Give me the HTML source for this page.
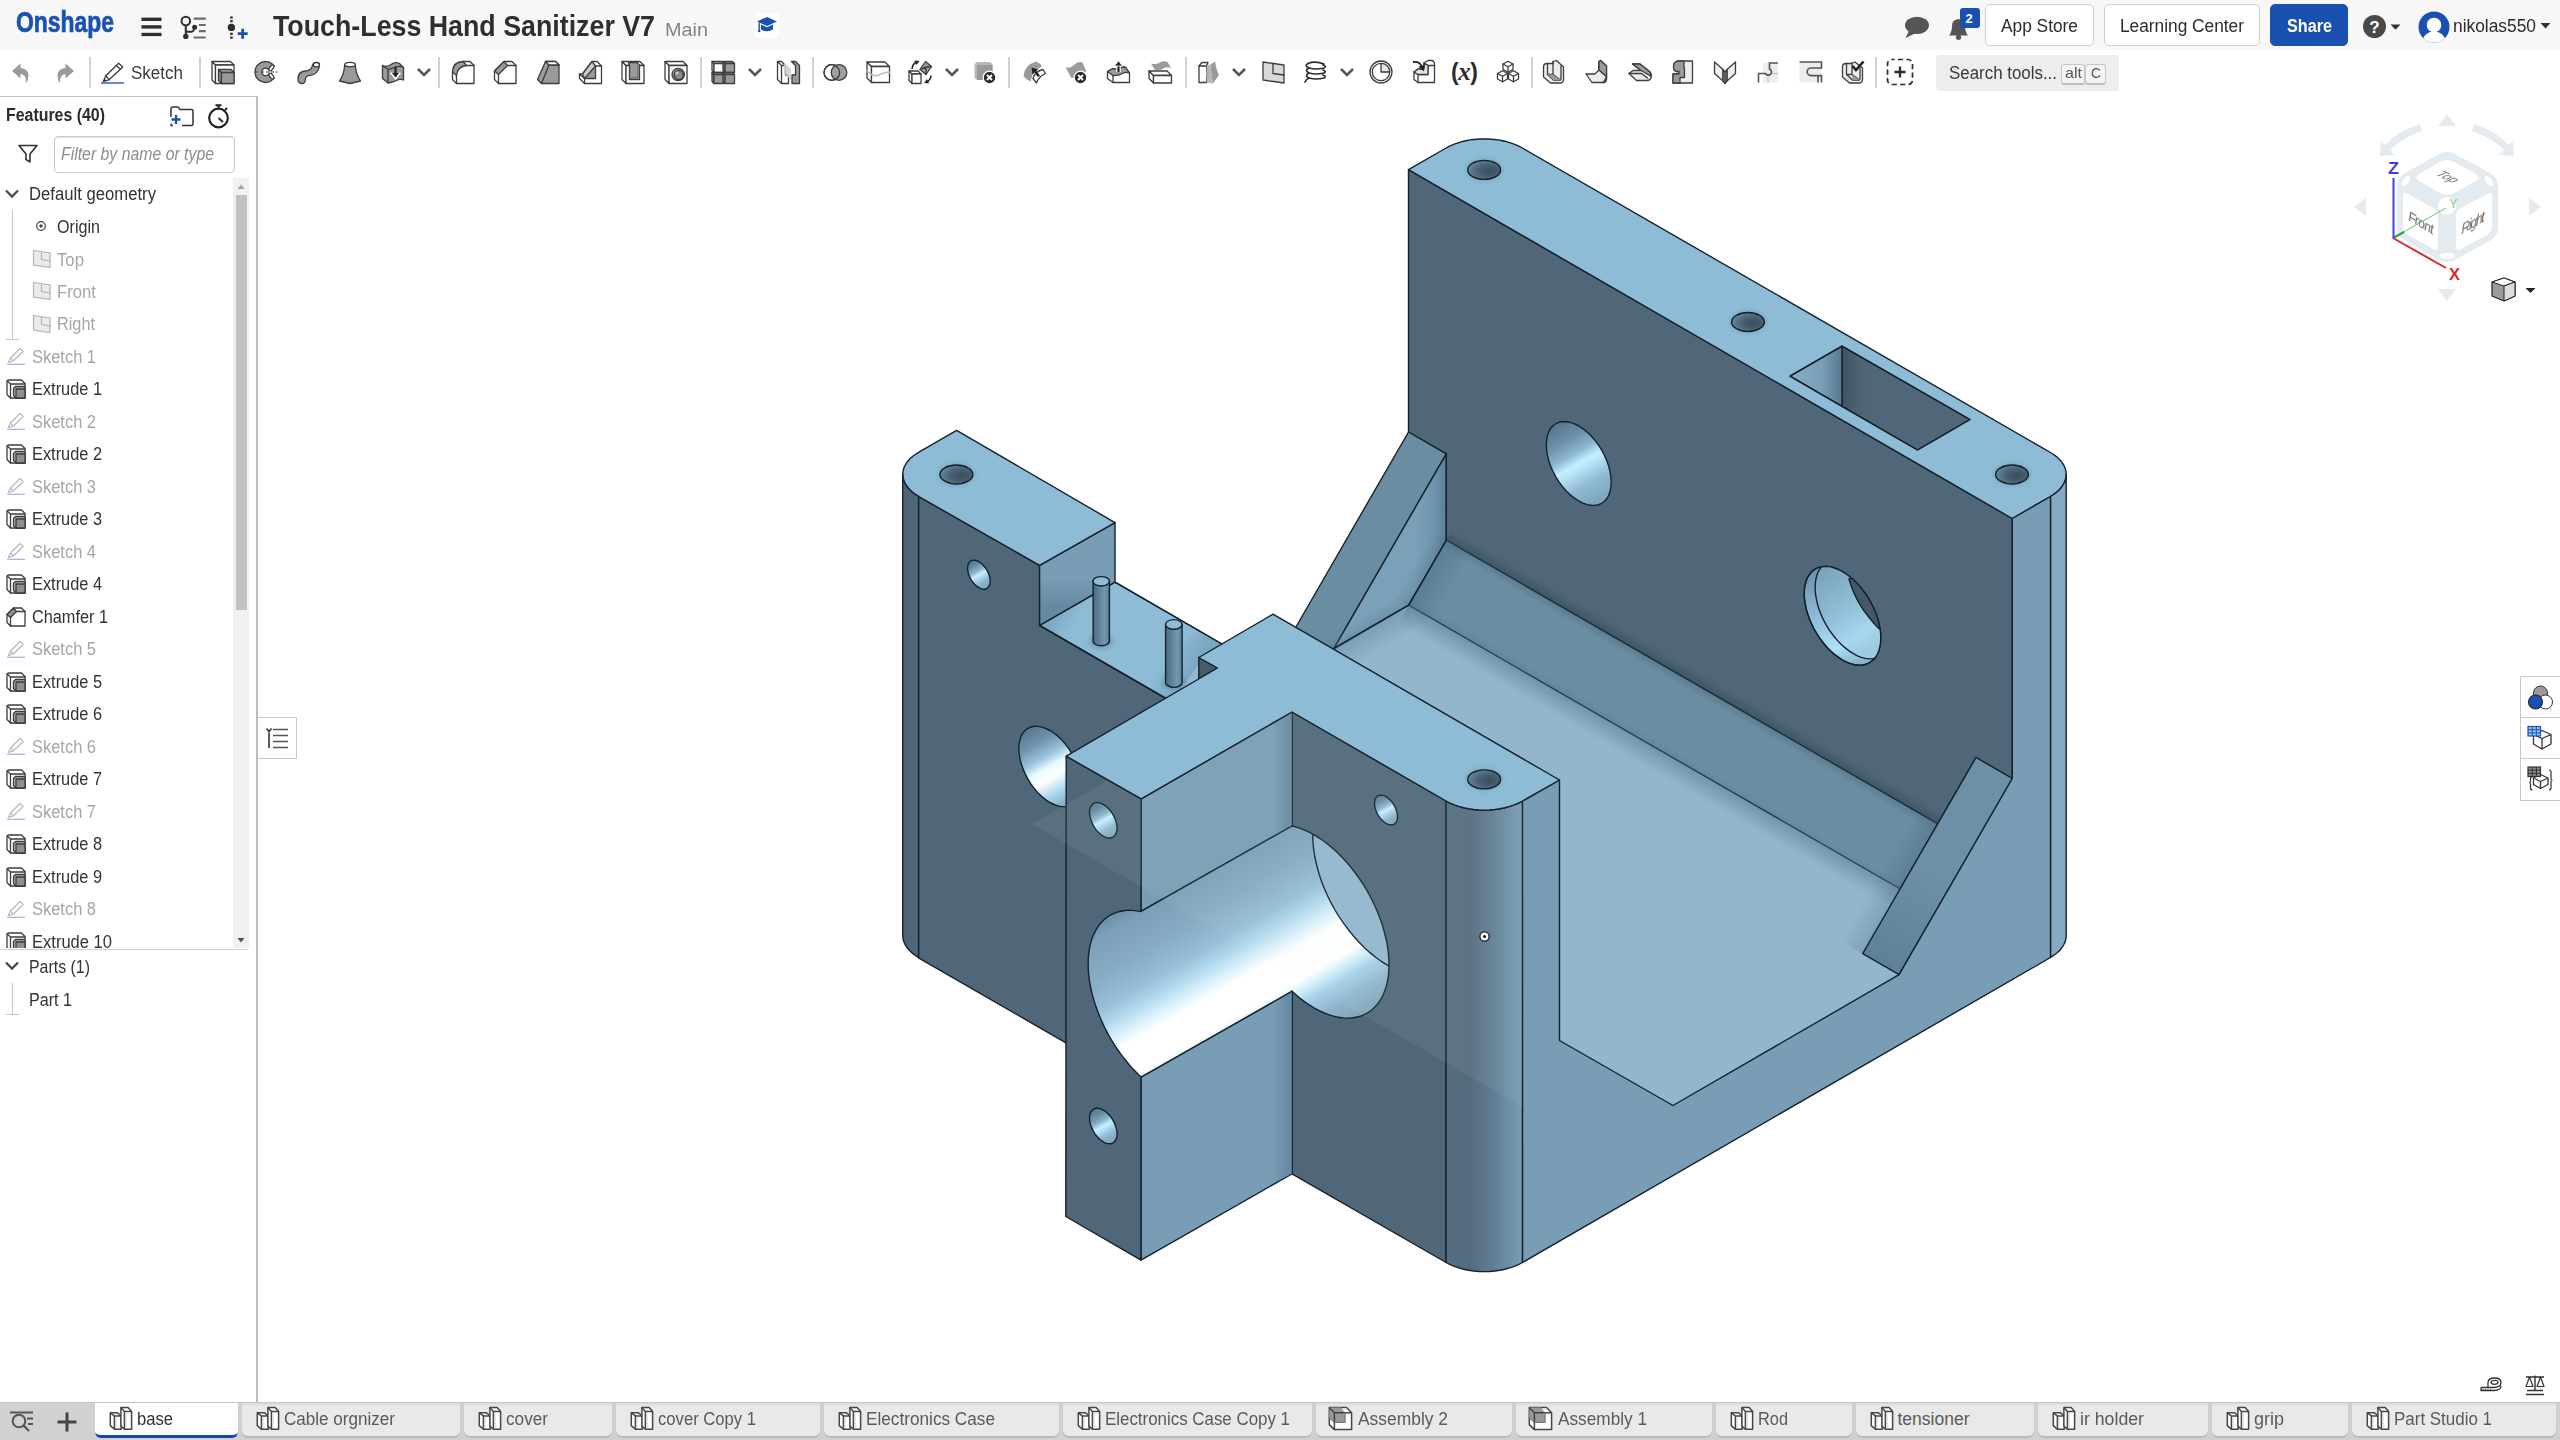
<!DOCTYPE html>
<html lang="en"><head><meta charset="utf-8"><title>Touch-Less Hand Sanitizer V7 | base</title>
<style>
html,body{margin:0;padding:0;}
body{width:2560px;height:1440px;position:relative;overflow:hidden;background:#fff;font-family:"Liberation Sans",sans-serif;}
.t{position:absolute;white-space:nowrap;transform-origin:0 50%;}
.abs{position:absolute;}
#hdr{position:absolute;left:0;top:0;width:2560px;height:50px;background:#f7f7f7;}
#tb{position:absolute;left:0;top:50px;width:2560px;height:46px;background:#fff;}
.sep{position:absolute;top:57px;width:2px;height:31px;background:#d2d2d2;}
.btn{position:absolute;top:4px;height:40px;border:1px solid #cfcfcf;border-radius:5px;background:#fff;box-sizing:content-box;}
#panel{position:absolute;left:0;top:96px;width:256px;height:1305px;border-bottom:1px solid #c8c8c8;background:#fff;border-top:1px solid #c4c4c4;border-right:2px solid #bdbdbd;box-sizing:content-box;}
#tabs{position:absolute;left:0;top:1402px;width:2560px;height:38px;background:#d1d1d1;border-top:1px solid #c6c6c6;box-sizing:border-box;}
.tab{position:absolute;top:0;height:32.5px;background:linear-gradient(#d9d9d9,#e9e9e9 3px);border-radius:0 0 6px 6px;box-shadow:0 1.5px 1px #b9b9b9;}
.tab.act{background:#fff;top:0;height:32px;border-bottom:3px solid #1648a8;border-radius:0 0 6px 6px;box-shadow:none;}
svg{position:absolute;overflow:visible;}
</style></head><body>

<svg id="model" style="left:0;top:0" width="2560" height="1440" viewBox="0 0 2560 1440">
<defs><filter id="blur2" x="-30%" y="-30%" width="160%" height="160%"><feGaussianBlur stdDeviation="2"/></filter><filter id="blur4" x="-30%" y="-30%" width="160%" height="160%"><feGaussianBlur stdDeviation="4"/></filter><linearGradient id="gCham" gradientUnits="userSpaceOnUse" x1="1446.3" y1="540" x2="1408.6" y2="605.2"><stop offset="0" stop-color="#5f8197"/><stop offset="0.25" stop-color="#6A8DA2"/><stop offset="0.8" stop-color="#6A8DA2"/><stop offset="1" stop-color="#62859b"/></linearGradient><linearGradient id="gAO1" gradientUnits="userSpaceOnUse" x1="1446.3" y1="540" x2="1452.3" y2="529.6"><stop offset="0" stop-color="#2f4352" stop-opacity="0.45"/><stop offset="1" stop-color="#2f4352" stop-opacity="0"/></linearGradient><linearGradient id="gAO1b" gradientUnits="userSpaceOnUse" x1="1446.3" y1="540" x2="1441.8" y2="547.8"><stop offset="0" stop-color="#3f5a6e" stop-opacity="0.35"/><stop offset="1" stop-color="#3f5a6e" stop-opacity="0"/></linearGradient><linearGradient id="gAO2" gradientUnits="userSpaceOnUse" x1="1408.6" y1="605.2" x2="1397.6" y2="624.3"><stop offset="0" stop-color="#557890" stop-opacity="0.55"/><stop offset="1" stop-color="#557890" stop-opacity="0"/></linearGradient><linearGradient id="gAO2b" gradientUnits="userSpaceOnUse" x1="1408.6" y1="605.2" x2="1413.1" y2="597.5"><stop offset="0" stop-color="#4f7088" stop-opacity="0.3"/><stop offset="1" stop-color="#4f7088" stop-opacity="0"/></linearGradient><linearGradient id="gAO3" gradientUnits="userSpaceOnUse" x1="1446.3" y1="540" x2="1472.2" y2="555"><stop offset="0" stop-color="#46677f" stop-opacity="0.4"/><stop offset="1" stop-color="#46677f" stop-opacity="0"/></linearGradient><linearGradient id="gAO4" gradientUnits="userSpaceOnUse" x1="1408.6" y1="605.2" x2="1421.6" y2="627.8"><stop offset="0" stop-color="#587b93" stop-opacity="0.4"/><stop offset="1" stop-color="#587b93" stop-opacity="0"/></linearGradient><linearGradient id="gAO5" gradientUnits="userSpaceOnUse" x1="1937.7" y1="823.7" x2="1915.2" y2="810.7"><stop offset="0" stop-color="#46677f" stop-opacity="0.35"/><stop offset="1" stop-color="#46677f" stop-opacity="0"/></linearGradient><linearGradient id="gAO6" gradientUnits="userSpaceOnUse" x1="1900.1" y1="889" x2="1877.5" y2="876"><stop offset="0" stop-color="#587b93" stop-opacity="0.35"/><stop offset="1" stop-color="#587b93" stop-opacity="0"/></linearGradient><linearGradient id="gHA" gradientUnits="userSpaceOnUse" x1="1555.8" y1="423.7" x2="1601.7" y2="503.3"><stop offset="0" stop-color="#56768d"/><stop offset="0.2" stop-color="#6A8EA6"/><stop offset="0.38" stop-color="#8CB6CF"/><stop offset="0.5" stop-color="#C6F0FF"/><stop offset="0.58" stop-color="#B4E0F5"/><stop offset="0.75" stop-color="#8FB8D2"/><stop offset="1" stop-color="#7BA2BB"/></linearGradient><clipPath id="cHB"><path d="M1880.8 637.9 L1880.6 633.2 L1879.9 628.2 L1878.9 623.2 L1877.5 618 L1875.6 612.8 L1873.5 607.7 L1870.9 602.6 L1868.1 597.7 L1865 593 L1861.6 588.6 L1858.1 584.4 L1854.3 580.6 L1850.5 577.2 L1846.5 574.2 L1842.5 571.6 L1838.5 569.5 L1834.5 568 L1830.7 566.9 L1826.9 566.4 L1823.4 566.5 L1820 567.1 L1816.9 568.2 L1814.1 569.8 L1811.5 571.9 L1809.4 574.6 L1807.5 577.6 L1806.1 581.1 L1805.1 585 L1804.4 589.2 L1804.2 593.7 L1804.4 598.4 L1805.1 603.4 L1806.1 608.4 L1807.5 613.6 L1809.4 618.8 L1811.5 623.9 L1814.1 629 L1816.9 633.9 L1820 638.6 L1823.4 643 L1826.9 647.2 L1830.7 651 L1834.5 654.4 L1838.5 657.4 L1842.5 660 L1846.5 662.1 L1850.5 663.6 L1854.3 664.7 L1858.1 665.2 L1861.6 665.1 L1865 664.5 L1868.1 663.4 L1870.9 661.8 L1873.5 659.7 L1875.6 657 L1877.5 654 L1878.9 650.5 L1879.9 646.6 L1880.6 642.4 L1880.8 637.9 Z"/></clipPath><linearGradient id="gHB1" gradientUnits="userSpaceOnUse" x1="1815" y1="570" x2="1850" y2="665"><stop offset="0" stop-color="#6d94ad"/><stop offset="0.45" stop-color="#8fbcd7"/><stop offset="0.8" stop-color="#aee0fa"/><stop offset="1" stop-color="#8ab4cd"/></linearGradient><linearGradient id="gHB2" gradientUnits="userSpaceOnUse" x1="1815" y1="575" x2="1870" y2="650"><stop offset="0" stop-color="#7aa2bb"/><stop offset="0.5" stop-color="#92bfd9"/><stop offset="0.8" stop-color="#a8d6ef"/><stop offset="1" stop-color="#9ccae3"/></linearGradient><radialGradient id="gZ1" cx="0.66" cy="0.56" r="0.8"><stop offset="0" stop-color="#384c5a"/><stop offset="0.45" stop-color="#4a6375"/><stop offset="1" stop-color="#7397b0"/></radialGradient><radialGradient id="gZ2" cx="0.66" cy="0.56" r="0.8"><stop offset="0" stop-color="#384c5a"/><stop offset="0.45" stop-color="#4a6375"/><stop offset="1" stop-color="#7397b0"/></radialGradient><radialGradient id="gZ3" cx="0.66" cy="0.56" r="0.8"><stop offset="0" stop-color="#384c5a"/><stop offset="0.45" stop-color="#4a6375"/><stop offset="1" stop-color="#7397b0"/></radialGradient><linearGradient id="gRc1" gradientUnits="userSpaceOnUse" x1="1790" y1="376.2" x2="1842" y2="376"><stop offset="0" stop-color="#86adc6"/><stop offset="0.6" stop-color="#7a9fb7"/><stop offset="1" stop-color="#587891"/></linearGradient><linearGradient id="gRc2" gradientUnits="userSpaceOnUse" x1="1842" y1="380" x2="1875" y2="380"><stop offset="0" stop-color="#3f5565"/><stop offset="0.5" stop-color="#4b6374"/><stop offset="1" stop-color="#4F6778"/></linearGradient><linearGradient id="gGs" gradientUnits="userSpaceOnUse" x1="1446" y1="540" x2="1395" y2="540"><stop offset="0" stop-color="#5d7f96"/><stop offset="0.25" stop-color="#7096ae"/><stop offset="0.6" stop-color="#7ba1b9"/><stop offset="1" stop-color="#7ba1b9"/></linearGradient><linearGradient id="gAO7" gradientUnits="userSpaceOnUse" x1="1446.3" y1="540" x2="1432.4" y2="532"><stop offset="0" stop-color="#557890" stop-opacity="0.45"/><stop offset="1" stop-color="#557890" stop-opacity="0"/></linearGradient><linearGradient id="gAO8" gradientUnits="userSpaceOnUse" x1="1408.6" y1="605.2" x2="1401.3" y2="593.3"><stop offset="0" stop-color="#557890" stop-opacity="0.4"/><stop offset="1" stop-color="#557890" stop-opacity="0"/></linearGradient><linearGradient id="gGr" gradientUnits="userSpaceOnUse" x1="1862.7" y1="953.7" x2="1914.7" y2="863.7"><stop offset="0" stop-color="#5f8197"/><stop offset="1" stop-color="#6d90a6"/></linearGradient><linearGradient id="gHT" gradientUnits="userSpaceOnUse" x1="1028" y1="728.3" x2="1072" y2="804.7"><stop offset="0" stop-color="#587991"/><stop offset="0.2" stop-color="#6E93AB"/><stop offset="0.38" stop-color="#9cc6de"/><stop offset="0.5" stop-color="#e8fbff"/><stop offset="0.62" stop-color="#ffffff"/><stop offset="0.8" stop-color="#a8d6ee"/><stop offset="1" stop-color="#7BA2BB"/></linearGradient><linearGradient id="gHs1" gradientUnits="userSpaceOnUse" x1="970.9" y1="560.9" x2="986.9" y2="588.5"><stop offset="0" stop-color="#56768d"/><stop offset="0.2" stop-color="#6A8EA6"/><stop offset="0.38" stop-color="#8CB6CF"/><stop offset="0.5" stop-color="#C6F0FF"/><stop offset="0.58" stop-color="#B4E0F5"/><stop offset="0.75" stop-color="#8FB8D2"/><stop offset="1" stop-color="#7BA2BB"/></linearGradient><linearGradient id="gLed" gradientUnits="userSpaceOnUse" x1="1039.6" y1="625" x2="1075" y2="645"><stop offset="0" stop-color="#7da5bf"/><stop offset="1" stop-color="#8EBCD7"/></linearGradient><linearGradient id="gLedA" gradientUnits="userSpaceOnUse" x1="1039.6" y1="625.3" x2="1065.6" y2="640.3"><stop offset="0" stop-color="#5f88a4" stop-opacity="0.5"/><stop offset="1" stop-color="#5f88a4" stop-opacity="0"/></linearGradient><linearGradient id="gLedB" gradientUnits="userSpaceOnUse" x1="1200" y1="665" x2="1170.6" y2="648"><stop offset="0" stop-color="#5f88a4" stop-opacity="0.45"/><stop offset="1" stop-color="#5f88a4" stop-opacity="0"/></linearGradient><linearGradient id="gTs" gradientUnits="userSpaceOnUse" x1="1077" y1="545" x2="1077" y2="605"><stop offset="0" stop-color="#789DB4"/><stop offset="0.55" stop-color="#789DB4"/><stop offset="1" stop-color="#668aa2"/></linearGradient><radialGradient id="gZ4" cx="0.66" cy="0.56" r="0.8"><stop offset="0" stop-color="#384c5a"/><stop offset="0.45" stop-color="#4a6375"/><stop offset="1" stop-color="#7397b0"/></radialGradient><linearGradient id="gTl" gradientUnits="userSpaceOnUse" x1="902" y1="0" x2="919" y2="0"><stop offset="0" stop-color="#4b6373"/><stop offset="1" stop-color="#506879"/></linearGradient><linearGradient id="gP1" gradientUnits="userSpaceOnUse" x1="1093.1" y1="0" x2="1109.4" y2="0"><stop offset="0" stop-color="#4d6a80"/><stop offset="0.35" stop-color="#5f8199"/><stop offset="0.7" stop-color="#7298b2"/><stop offset="1" stop-color="#5d7f98"/></linearGradient><linearGradient id="gP2" gradientUnits="userSpaceOnUse" x1="1165.6" y1="0" x2="1182.1" y2="0"><stop offset="0" stop-color="#4d6a80"/><stop offset="0.35" stop-color="#5f8199"/><stop offset="0.7" stop-color="#7298b2"/><stop offset="1" stop-color="#5d7f98"/></linearGradient><linearGradient id="gUw" gradientUnits="userSpaceOnUse" x1="1292" y1="0" x2="1272" y2="0"><stop offset="0" stop-color="#5f8299" stop-opacity="0.8"/><stop offset="1" stop-color="#5f8299" stop-opacity="0"/></linearGradient><linearGradient id="gBore" gradientUnits="userSpaceOnUse" x1="1100" y1="921.5" x2="1206" y2="1105"><stop offset="0" stop-color="#6C8FA7"/><stop offset="0.06" stop-color="#7A9FB7"/><stop offset="0.22" stop-color="#86ABC3"/><stop offset="0.36" stop-color="#97BFD7"/><stop offset="0.44" stop-color="#B2DAEE"/><stop offset="0.51" stop-color="#DAF2FB"/><stop offset="0.57" stop-color="#FFFFFF"/><stop offset="0.71" stop-color="#FFFFFF"/><stop offset="0.76" stop-color="#CFEFFA"/><stop offset="0.81" stop-color="#A8D2E8"/><stop offset="0.9" stop-color="#8FB6CE"/><stop offset="1" stop-color="#7FA5BD"/></linearGradient><clipPath id="cBore"><path d="M1389 964.6 L1388.8 957.7 L1388.1 950.6 L1386.9 943.2 L1385.3 935.8 L1383.3 928.2 L1380.8 920.6 L1378 913.1 L1374.7 905.5 L1371 898.1 L1367.1 890.8 L1362.7 883.7 L1358.1 876.8 L1353.2 870.2 L1348.1 863.9 L1342.8 858 L1337.2 852.5 L1331.6 847.4 L1325.8 842.7 L1320 838.5 L1314.1 834.9 L1308.2 831.7 L1302.4 829.2 L1296.6 827.2 L1290.9 825.7 L1285.4 824.9 L1280.1 824.7 L1274.9 825 L1270.1 826 L1265.4 827.5 L1261.1 829.6 L1257.1 832.3 L1253.5 835.5 L1250.2 839.3 L1247.3 843.6 L1244.9 848.3 L1242.8 853.5 L1241.2 859.1 L1240.1 865.1 L1239.4 871.5 L1239.2 878.1 L1239.4 885 L1240.1 892.2 L1241.2 899.5 L1242.8 907 L1244.9 914.5 L1247.3 922.1 L1250.2 929.7 L1253.5 937.2 L1257.1 944.7 L1261.1 952 L1265.4 959.1 L1270.1 965.9 L1274.9 972.5 L1280.1 978.8 L1285.4 984.7 L1290.9 990.3 L1296.6 995.4 L1302.4 1000 L1308.2 1004.2 L1314.1 1007.9 L1320 1011 L1325.8 1013.6 L1331.6 1015.6 L1337.2 1017 L1342.8 1017.8 L1348.1 1018.1 L1353.2 1017.7 L1358.1 1016.8 L1362.7 1015.2 L1367.1 1013.1 L1371 1010.4 L1374.7 1007.2 L1378 1003.4 L1380.8 999.2 L1383.3 994.4 L1385.3 989.2 L1386.9 983.6 L1388.1 977.6 L1388.8 971.3 L1389 964.6 Z"/></clipPath><linearGradient id="gHs2" gradientUnits="userSpaceOnUse" x1="1093.6" y1="803.4" x2="1113" y2="837.2"><stop offset="0" stop-color="#56768d"/><stop offset="0.2" stop-color="#6A8EA6"/><stop offset="0.38" stop-color="#8CB6CF"/><stop offset="0.5" stop-color="#C6F0FF"/><stop offset="0.58" stop-color="#B4E0F5"/><stop offset="0.75" stop-color="#8FB8D2"/><stop offset="1" stop-color="#7BA2BB"/></linearGradient><linearGradient id="gHs3" gradientUnits="userSpaceOnUse" x1="1093.6" y1="1109.1" x2="1113" y2="1142.9"><stop offset="0" stop-color="#56768d"/><stop offset="0.2" stop-color="#6A8EA6"/><stop offset="0.38" stop-color="#8CB6CF"/><stop offset="0.5" stop-color="#C6F0FF"/><stop offset="0.58" stop-color="#B4E0F5"/><stop offset="0.75" stop-color="#8FB8D2"/><stop offset="1" stop-color="#7BA2BB"/></linearGradient><linearGradient id="gHs4" gradientUnits="userSpaceOnUse" x1="1377.9" y1="795.9" x2="1394.1" y2="824.1"><stop offset="0" stop-color="#56768d"/><stop offset="0.2" stop-color="#6A8EA6"/><stop offset="0.38" stop-color="#8CB6CF"/><stop offset="0.5" stop-color="#C6F0FF"/><stop offset="0.58" stop-color="#B4E0F5"/><stop offset="0.75" stop-color="#8FB8D2"/><stop offset="1" stop-color="#7BA2BB"/></linearGradient><linearGradient id="gCol" gradientUnits="userSpaceOnUse" x1="1446.1" y1="0" x2="1522.4" y2="0"><stop offset="0" stop-color="#566e80"/><stop offset="0.3" stop-color="#536b7d"/><stop offset="0.6" stop-color="#5f7d92"/><stop offset="1" stop-color="#789DB4"/></linearGradient><radialGradient id="gZ5" cx="0.66" cy="0.56" r="0.8"><stop offset="0" stop-color="#384c5a"/><stop offset="0.45" stop-color="#4a6375"/><stop offset="1" stop-color="#7397b0"/></radialGradient></defs>
<path d="M1402.6 597.2 L1904.1 885 L1865.7 953.7 L1902.1 976.7 L1673 1108.5 L1556.5 1042.5 L1556.5 783 L1318 646 Z" fill="#93B6CD" stroke="none" stroke-width="1.4" stroke-linejoin="round" />
<path d="M1446.3 540 L1937.7 823.7 L1900.1 889 L1408.6 605.2 Z" fill="#6A8DA2" stroke="#15222b" stroke-width="1.4" stroke-linejoin="round" />
<path d="M1408.5 169.7 L2012.3 518.5 L2012.3 778.5 L1976 757.5 L1937.7 823.7 L1446.3 540 L1446.3 453.8 L1408.5 432 Z" fill="#4F6778" stroke="#15222b" stroke-width="1.4" stroke-linejoin="round" />
<path d="M1446.3 540 L1937.7 823.7 L1943.7 813.4 L1452.3 529.6 Z" fill="url(#gAO1)" stroke="none" stroke-width="1.4" stroke-linejoin="round" />
<path d="M1446.3 540 L1937.7 823.7 L1933.2 831.5 L1441.8 547.8 Z" fill="url(#gAO1b)" stroke="none" stroke-width="1.4" stroke-linejoin="round" />
<path d="M1408.6 605.2 L1900.1 889 L1889.1 908.1 L1397.6 624.3 Z" fill="url(#gAO2)" stroke="none" stroke-width="1.4" stroke-linejoin="round" />
<path d="M1408.6 605.2 L1900.1 889 L1904.6 881.2 L1413.1 597.5 Z" fill="url(#gAO2b)" stroke="none" stroke-width="1.4" stroke-linejoin="round" />
<path d="M1446.3 540 L1408.6 605.2 L1434.6 620.3 L1472.2 555 Z" fill="url(#gAO3)" stroke="none" stroke-width="1.4" stroke-linejoin="round" />
<path d="M1408.6 605.2 L1334 648.3 L1360 663.3 L1434.6 620.3 Z" fill="url(#gAO4)" stroke="none" stroke-width="1.4" stroke-linejoin="round" />
<path d="M1937.7 823.7 L1900.1 889 L1877.5 876 L1915.2 810.7 Z" fill="url(#gAO5)" stroke="none" stroke-width="1.4" stroke-linejoin="round" />
<path d="M1900.1 889 L1862.7 953.7 L1840.2 940.7 L1877.5 876 Z" fill="url(#gAO6)" stroke="none" stroke-width="1.4" stroke-linejoin="round" />
<path d="M1611.2 482.2 L1610.9 477.2 L1610.1 471.9 L1608.8 466.5 L1606.9 461 L1604.5 455.5 L1601.7 450.2 L1598.5 445.2 L1595 440.4 L1591.2 436 L1587.2 432.1 L1583 428.8 L1578.8 426 L1574.5 423.9 L1570.3 422.4 L1566.3 421.7 L1562.5 421.6 L1559 422.3 L1555.8 423.7 L1553 425.8 L1550.6 428.5 L1548.7 431.8 L1547.4 435.7 L1546.6 440 L1546.3 444.8 L1546.6 449.8 L1547.4 455.1 L1548.7 460.5 L1550.6 466 L1553 471.5 L1555.8 476.8 L1559 481.8 L1562.5 486.6 L1566.3 491 L1570.3 494.9 L1574.5 498.2 L1578.8 501 L1583 503.1 L1587.2 504.6 L1591.2 505.3 L1595 505.4 L1598.5 504.7 L1601.7 503.3 L1604.5 501.2 L1606.9 498.5 L1608.8 495.2 L1610.1 491.3 L1610.9 487 L1611.2 482.2 Z" fill="url(#gHA)" stroke="#15222b" stroke-width="1.4" stroke-linejoin="round" />
<path d="M1880.8 637.9 L1880.6 633.2 L1879.9 628.2 L1878.9 623.2 L1877.5 618 L1875.6 612.8 L1873.5 607.7 L1870.9 602.6 L1868.1 597.7 L1865 593 L1861.6 588.6 L1858.1 584.4 L1854.3 580.6 L1850.5 577.2 L1846.5 574.2 L1842.5 571.6 L1838.5 569.5 L1834.5 568 L1830.7 566.9 L1826.9 566.4 L1823.4 566.5 L1820 567.1 L1816.9 568.2 L1814.1 569.8 L1811.5 571.9 L1809.4 574.6 L1807.5 577.6 L1806.1 581.1 L1805.1 585 L1804.4 589.2 L1804.2 593.7 L1804.4 598.4 L1805.1 603.4 L1806.1 608.4 L1807.5 613.6 L1809.4 618.8 L1811.5 623.9 L1814.1 629 L1816.9 633.9 L1820 638.6 L1823.4 643 L1826.9 647.2 L1830.7 651 L1834.5 654.4 L1838.5 657.4 L1842.5 660 L1846.5 662.1 L1850.5 663.6 L1854.3 664.7 L1858.1 665.2 L1861.6 665.1 L1865 664.5 L1868.1 663.4 L1870.9 661.8 L1873.5 659.7 L1875.6 657 L1877.5 654 L1878.9 650.5 L1879.9 646.6 L1880.6 642.4 L1880.8 637.9 Z" fill="url(#gHB1)" stroke="#15222b" stroke-width="1.4" stroke-linejoin="round" />
<g clip-path="url(#cHB)"><path d="M1891.7 631.6 L1891.5 626.9 L1890.9 621.9 L1889.8 616.9 L1888.4 611.7 L1886.6 606.5 L1884.4 601.4 L1881.9 596.3 L1879 591.4 L1875.9 586.7 L1872.6 582.3 L1869 578.1 L1865.2 574.3 L1861.4 570.9 L1857.4 567.9 L1853.4 565.3 L1849.4 563.2 L1845.5 561.7 L1841.6 560.6 L1837.8 560.1 L1834.3 560.2 L1830.9 560.8 L1827.8 561.9 L1825 563.5 L1822.4 565.6 L1820.3 568.3 L1818.4 571.3 L1817 574.8 L1816 578.7 L1815.3 582.9 L1815.1 587.4 L1815.3 592.1 L1816 597.1 L1817 602.1 L1818.4 607.3 L1820.3 612.5 L1822.4 617.6 L1825 622.7 L1827.8 627.6 L1830.9 632.3 L1834.3 636.7 L1837.8 640.9 L1841.6 644.7 L1845.5 648.1 L1849.4 651.1 L1853.4 653.7 L1857.4 655.8 L1861.4 657.3 L1865.2 658.4 L1869 658.9 L1872.6 658.8 L1875.9 658.2 L1879 657.1 L1881.9 655.5 L1884.4 653.4 L1886.6 650.7 L1888.4 647.7 L1889.8 644.2 L1890.9 640.3 L1891.5 636.1 L1891.7 631.6 Z" fill="url(#gHB2)" stroke="#15222b" stroke-width="1.4"/>
<path d="M1849 579 Q1853 593 1860 604.6 T1878.75 628.5 L1895 630 L1895 560 Z" fill="#43596a" stroke="#15222b" stroke-width="1.4"/></g>
<path d="M1880.8 637.9 L1880.6 633.2 L1879.9 628.2 L1878.9 623.2 L1877.5 618 L1875.6 612.8 L1873.5 607.7 L1870.9 602.6 L1868.1 597.7 L1865 593 L1861.6 588.6 L1858.1 584.4 L1854.3 580.6 L1850.5 577.2 L1846.5 574.2 L1842.5 571.6 L1838.5 569.5 L1834.5 568 L1830.7 566.9 L1826.9 566.4 L1823.4 566.5 L1820 567.1 L1816.9 568.2 L1814.1 569.8 L1811.5 571.9 L1809.4 574.6 L1807.5 577.6 L1806.1 581.1 L1805.1 585 L1804.4 589.2 L1804.2 593.7 L1804.4 598.4 L1805.1 603.4 L1806.1 608.4 L1807.5 613.6 L1809.4 618.8 L1811.5 623.9 L1814.1 629 L1816.9 633.9 L1820 638.6 L1823.4 643 L1826.9 647.2 L1830.7 651 L1834.5 654.4 L1838.5 657.4 L1842.5 660 L1846.5 662.1 L1850.5 663.6 L1854.3 664.7 L1858.1 665.2 L1861.6 665.1 L1865 664.5 L1868.1 663.4 L1870.9 661.8 L1873.5 659.7 L1875.6 657 L1877.5 654 L1878.9 650.5 L1879.9 646.6 L1880.6 642.4 L1880.8 637.9 L1880.8 637.9" fill="none" stroke="#15222b" stroke-width="1.4" stroke-linecap="round" stroke-linejoin="round" />
<path d="M1408.5 169.7 L1446.1 148 L1446.1 148 L1448.7 146.6 L1451.4 145.3 L1454.3 144.1 L1457.3 143.1 L1460.4 142.1 L1463.6 141.3 L1466.9 140.5 L1470.3 139.9 L1473.7 139.5 L1477.2 139.2 L1480.7 139 L1484.2 138.9 L1487.7 139 L1491.2 139.2 L1494.7 139.5 L1498.1 139.9 L1501.5 140.5 L1504.8 141.3 L1508 142.1 L1511.1 143.1 L1514.1 144.1 L1517 145.3 L1519.7 146.6 L1522.3 148 L2050.5 452.5 L2050.5 452.5 L2052.9 454 L2055.1 455.6 L2057.2 457.2 L2059 458.9 L2060.7 460.7 L2062.1 462.6 L2063.4 464.5 L2064.4 466.4 L2065.2 468.4 L2065.8 470.4 L2066.1 472.5 L2066.2 474.5 L2066.1 476.5 L2065.8 478.6 L2065.2 480.6 L2064.4 482.6 L2063.4 484.5 L2062.1 486.4 L2060.7 488.3 L2059 490.1 L2057.2 491.8 L2055.1 493.4 L2052.9 495 L2050.5 496.5 L2012.3 518.5 Z" fill="#8EBCD7" stroke="#15222b" stroke-width="1.4" stroke-linejoin="round" />
<ellipse cx="1484.2" cy="169.9" rx="18.9" ry="12" fill="#6f97b3" opacity="0.45" filter="url(#blur2)"/>
<ellipse cx="1484.2" cy="169.9" rx="16.4" ry="9.5" fill="url(#gZ1)" stroke="#15222b" stroke-width="1.4"/>
<ellipse cx="1748" cy="322" rx="18.9" ry="12" fill="#6f97b3" opacity="0.45" filter="url(#blur2)"/>
<ellipse cx="1748" cy="322" rx="16.4" ry="9.5" fill="url(#gZ2)" stroke="#15222b" stroke-width="1.4"/>
<ellipse cx="2012" cy="474.5" rx="18.9" ry="12" fill="#6f97b3" opacity="0.45" filter="url(#blur2)"/>
<ellipse cx="2012" cy="474.5" rx="16.4" ry="9.5" fill="url(#gZ3)" stroke="#15222b" stroke-width="1.4"/>
<path d="M1842 346.2 L1970 419.5 L1917.5 450 L1842 406.3 Z" fill="url(#gRc2)" stroke="#15222b" stroke-width="1.4" stroke-linejoin="round" />
<path d="M1790 376.2 L1842 346.2 L1842 406.3 Z" fill="url(#gRc1)" stroke="#15222b" stroke-width="1.4" stroke-linejoin="round" />
<path d="M1790 376.2 L1842 346.2 L1970 419.5 L1917.5 450 L1790 376.2" fill="none" stroke="#15222b" stroke-width="1.4" stroke-linecap="round" stroke-linejoin="round" />
<path d="M2050.5 496.5 L2054 494.2 L2057.2 491.8 L2059.9 489.2 L2062.1 486.4 L2063.9 483.5 L2065.2 480.6 L2066 477.5 L2066.2 474.5 L2066.2 935.5 L2066 938.5 L2065.2 941.6 L2063.9 944.5 L2062.1 947.4 L2059.9 950.2 L2057.2 952.8 L2054 955.2 L2050.5 957.5 Z" fill="#84aac4" stroke="#15222b" stroke-width="1.4" stroke-linejoin="round" />
<path d="M1408.5 432 L1446.3 453.8 L1331.4 652.8 L1293.6 631 Z" fill="#6A8DA2" stroke="#15222b" stroke-width="1.4" stroke-linejoin="round" />
<path d="M1446.3 453.8 L1446.3 540 L1408.6 605.2 L1331.4 649.8 L1331.4 652.8 Z" fill="url(#gGs)" stroke="#15222b" stroke-width="1.4" stroke-linejoin="round" />
<path d="M1446.3 540 L1408.6 605.2 L1394.7 597.2 L1432.4 532 Z" fill="url(#gAO7)" stroke="none" stroke-width="1.4" stroke-linejoin="round" />
<path d="M1408.6 605.2 L1331.4 652.8 L1324.4 640.7 L1401.6 593.1 Z" fill="url(#gAO8)" stroke="none" stroke-width="1.4" stroke-linejoin="round" />
<path d="M1446.3 453.8 L1446.3 540 L1408.6 605.2 L1331.4 649.8" fill="none" stroke="#15222b" stroke-width="1.4" stroke-linecap="round" stroke-linejoin="round" />
<path d="M1976 757.5 L2012.3 778.5 L1899.1 974.7 L1862.7 953.7 Z" fill="url(#gGr)" stroke="#15222b" stroke-width="1.4" stroke-linejoin="round" />
<path d="M1522.4 801 L1559.5 780 L1559.5 1040.5 L1673 1105.5 L1899.1 974.7 L2012.3 778.5 L2012.3 518.5 L2050.5 496.5 L2050.5 957.5 L1522.5 1262.5 Z" fill="#789DB4" stroke="#15222b" stroke-width="1.4" stroke-linejoin="round" />
<path d="M918.5 496.4 L1039.6 565.3 L1039.6 625.3 L1172 701.8 L1172 706 L1072 762 L1072 1046.3 L918.5 957.9 Z" fill="#4F6778" stroke="#15222b" stroke-width="1.4" stroke-linejoin="round" />
<path d="M1081.2 784.5 L1080.9 779.6 L1080.1 774.6 L1078.8 769.4 L1077 764.1 L1074.7 758.9 L1072 753.8 L1069 748.9 L1065.6 744.3 L1061.9 740.1 L1058.1 736.4 L1054.1 733.2 L1050 730.5 L1045.9 728.5 L1041.9 727.1 L1038.1 726.4 L1034.4 726.3 L1031 727 L1028 728.3 L1025.3 730.3 L1023 732.9 L1021.2 736.1 L1019.9 739.8 L1019.1 744 L1018.8 748.5 L1019.1 753.4 L1019.9 758.4 L1021.2 763.6 L1023 768.9 L1025.3 774.1 L1028 779.2 L1031 784.1 L1034.4 788.7 L1038.1 792.9 L1041.9 796.6 L1045.9 799.8 L1050 802.5 L1054.1 804.5 L1058.1 805.9 L1061.9 806.6 L1065.6 806.7 L1069 806 L1072 804.7 L1074.7 802.7 L1077 800.1 L1078.8 796.9 L1080.1 793.2 L1080.9 789 L1081.2 784.5 Z" fill="url(#gHT)" stroke="#15222b" stroke-width="1.4" stroke-linejoin="round" />
<path d="M990.2 581.2 L990.1 579.4 L989.8 577.6 L989.3 575.7 L988.6 573.8 L987.8 571.9 L986.9 570.1 L985.8 568.3 L984.5 566.7 L983.2 565.2 L981.8 563.8 L980.4 562.7 L978.9 561.7 L977.4 561 L976 560.5 L974.6 560.2 L973.3 560.2 L972 560.4 L970.9 560.9 L970 561.6 L969.2 562.6 L968.5 563.7 L968 565.1 L967.7 566.6 L967.6 568.2 L967.7 570 L968 571.8 L968.5 573.7 L969.2 575.6 L970 577.5 L970.9 579.3 L972 581.1 L973.3 582.7 L974.6 584.2 L976 585.6 L977.4 586.7 L978.9 587.7 L980.4 588.4 L981.8 588.9 L983.2 589.2 L984.5 589.2 L985.8 589 L986.9 588.5 L987.8 587.8 L988.6 586.8 L989.3 585.7 L989.8 584.3 L990.1 582.8 L990.2 581.2 Z" fill="url(#gHs1)" stroke="#15222b" stroke-width="1.4" stroke-linejoin="round" />
<path d="M1039.6 625.3 L1115 582.2 L1228 647.5 L1228 668 L1172 701.8 Z" fill="#8EBCD7" stroke="#15222b" stroke-width="1.4" stroke-linejoin="round" />
<path d="M1039.6 625.3 L1115 582.2 L1141 597.2 L1065.6 640.3 Z" fill="url(#gLedA)" stroke="none" stroke-width="1.4" stroke-linejoin="round" />
<path d="M1228 647.5 L1198.8 664 L1172 701.8 L1146 686.8 L1196.8 629.5 Z" fill="url(#gLedB)" stroke="none" stroke-width="1.4" stroke-linejoin="round" />
<path d="M1039.6 625.3 L1172 701.8" fill="none" stroke="#15222b" stroke-width="1.4" stroke-linecap="round" stroke-linejoin="round" />
<path d="M1115 582.2 L1228 647.5" fill="none" stroke="#15222b" stroke-width="1.4" stroke-linecap="round" stroke-linejoin="round" />
<path d="M1039.6 565.3 L1115 522.6 L1115 582.2 L1039.6 625.3 Z" fill="url(#gTs)" stroke="#15222b" stroke-width="1.4" stroke-linejoin="round" />
<path d="M918.5 452.4 L956.6 430.4 L1115 522.6 L1039.6 565.3 L918.5 496.4 L918.5 496.4 L913.8 493.3 L909.9 490 L906.8 486.3 L904.5 482.5 L903.2 478.5 L902.7 474.4 L903.2 470.3 L904.5 466.3 L906.8 462.5 L909.9 458.8 L913.8 455.5 L918.5 452.4 Z" fill="#8EBCD7" stroke="#15222b" stroke-width="1.4" stroke-linejoin="round" />
<ellipse cx="956.4" cy="474.5" rx="18.9" ry="12" fill="#6f97b3" opacity="0.45" filter="url(#blur2)"/>
<ellipse cx="956.4" cy="474.5" rx="16.4" ry="9.5" fill="url(#gZ4)" stroke="#15222b" stroke-width="1.4"/>
<path d="M902.7 474.4 L903 477.4 L903.7 480.5 L905 483.4 L906.8 486.3 L909.1 489.1 L911.8 491.7 L914.9 494.1 L918.5 496.4 L918.5 957.4 L914.9 955.1 L911.8 952.7 L909.1 950.1 L906.8 947.3 L905 944.4 L903.7 941.5 L903 938.4 L902.7 935.4 Z" fill="url(#gTl)" stroke="#15222b" stroke-width="1.4" stroke-linejoin="round" />
<ellipse cx="1101.2" cy="641.5" rx="12.2" ry="7.7" fill="#5f869f" opacity="0.5" filter="url(#blur2)"/>
<path d="M1093.1 581.3 L1093.1 641.5 A8.2 4.7 0 0 0 1109.4 641.5 L1109.4 581.3 Z" fill="url(#gP1)" stroke="#15222b" stroke-width="1.4"/>
<ellipse cx="1101.2" cy="581.3" rx="8.2" ry="4.7" fill="#8fbdd9" stroke="#15222b" stroke-width="1.4"/>
<ellipse cx="1173.8" cy="682.5" rx="12.2" ry="7.8" fill="#5f869f" opacity="0.5" filter="url(#blur2)"/>
<path d="M1165.6 624.4 L1165.6 682.5 A8.2 4.8 0 0 0 1182.1 682.5 L1182.1 624.4 Z" fill="url(#gP2)" stroke="#15222b" stroke-width="1.4"/>
<ellipse cx="1173.8" cy="624.4" rx="8.2" ry="4.8" fill="#8fbdd9" stroke="#15222b" stroke-width="1.4"/>
<path d="M1198.8 657.5 L1217.5 668 L1198.8 678.9 Z" fill="#455c6c" stroke="#15222b" stroke-width="1.4" stroke-linejoin="round" />
<path d="M1292 712 L1446.1 801 L1446.1 1262.5 L1292 1173.8 Z" fill="#4F6778" stroke="#15222b" stroke-width="1.4" stroke-linejoin="round" />
<path d="M1141.2 798.8 L1292 712 L1292 826 L1141 911.4 Z" fill="#789DB4" stroke="#15222b" stroke-width="1.4" stroke-linejoin="round" />
<path d="M1292 712 L1292 826 L1271.2 838 L1271.2 724 Z" fill="url(#gUw)" stroke="none" stroke-width="1.4" stroke-linejoin="round" />
<path d="M1141 1077.2 L1292 991.2 L1292 1173.8 L1141 1260.2 Z" fill="#789DB4" stroke="#15222b" stroke-width="1.4" stroke-linejoin="round" />
<path d="M1292 991.2 L1292 1173.8 L1271.2 1185.8 L1271.2 1003.2 Z" fill="url(#gUw)" stroke="none" stroke-width="1.4" stroke-linejoin="round" />
<path d="M1141 911.6 L1292 826 L1295.4 826.8 L1298.8 827.9 L1302.2 829.1 L1305.7 830.6 L1309.2 832.2 L1312.7 834.1 L1316.2 836.1 L1319.7 838.3 L1323.2 840.8 L1326.6 843.3 L1330.1 846.1 L1333.5 849 L1336.8 852.1 L1340.1 855.3 L1343.4 858.7 L1346.6 862.2 L1349.7 865.8 L1352.7 869.6 L1355.7 873.5 L1358.6 877.5 L1361.3 881.5 L1364 885.7 L1366.6 889.9 L1369 894.2 L1371.3 898.6 L1373.5 903 L1375.6 907.5 L1377.5 912 L1379.3 916.5 L1381 921 L1382.5 925.5 L1383.8 930 L1385 934.5 L1386.1 939 L1387 943.4 L1387.7 947.8 L1388.3 952.1 L1388.7 956.4 L1388.9 960.5 L1389 964.6 L1388.9 968.6 L1388.7 972.5 L1388.3 976.3 L1387.7 980 L1387 983.5 L1386.1 986.9 L1385 990.1 L1383.8 993.2 L1382.5 996.2 L1381 999 L1379.3 1001.6 L1377.5 1004 L1375.6 1006.3 L1373.5 1008.3 L1371.3 1010.2 L1369 1011.9 L1366.6 1013.4 L1364 1014.7 L1361.3 1015.8 L1358.6 1016.7 L1355.7 1017.3 L1352.7 1017.8 L1349.7 1018 L1346.6 1018.1 L1343.4 1017.9 L1340.1 1017.5 L1336.8 1016.9 L1333.5 1016.1 L1330.1 1015.1 L1326.6 1013.9 L1323.2 1012.5 L1319.7 1010.9 L1316.2 1009.1 L1312.7 1007 L1309.2 1004.9 L1305.7 1002.5 L1302.2 999.9 L1298.8 997.2 L1295.4 994.3 L1292 991.3 L1141 1077 L1138 1074.1 L1135 1071 L1132.1 1067.9 L1129.2 1064.7 L1126.4 1061.3 L1123.7 1057.9 L1121 1054.4 L1118.4 1050.7 L1115.9 1047.1 L1113.5 1043.3 L1111.2 1039.5 L1108.9 1035.6 L1106.8 1031.6 L1104.7 1027.6 L1102.8 1023.6 L1101 1019.6 L1099.3 1015.5 L1097.7 1011.4 L1096.2 1007.3 L1094.8 1003.2 L1093.6 999.1 L1092.4 995 L1091.4 991 L1090.6 987 L1089.8 983 L1089.2 979 L1088.8 975.1 L1088.4 971.3 L1088.2 967.5 L1088.2 963.8 L1088.2 960.2 L1088.4 956.6 L1088.8 953.2 L1089.2 949.8 L1089.8 946.6 L1090.6 943.4 L1091.4 940.4 L1092.4 937.5 L1093.6 934.7 L1094.8 932.1 L1096.2 929.5 L1097.7 927.2 L1099.3 924.9 L1101 922.8 L1102.8 920.9 L1104.7 919.1 L1106.8 917.5 L1108.9 916 L1111.2 914.7 L1113.5 913.6 L1115.9 912.6 L1118.4 911.8 L1121 911.2 L1123.7 910.7 L1126.4 910.4 L1129.2 910.3 L1132.1 910.4 L1135 910.6 L1138 911.1 L1141 911.6 Z" fill="url(#gBore)" stroke="none" stroke-width="1.4" stroke-linejoin="round" />
<g clip-path="url(#cBore)"><path d="M1462.6 922.1 L1462.4 915.2 L1461.7 908.1 L1460.5 900.7 L1458.9 893.3 L1456.9 885.7 L1454.4 878.1 L1451.6 870.6 L1448.3 863 L1444.7 855.6 L1440.7 848.3 L1436.3 841.2 L1431.7 834.3 L1426.8 827.7 L1421.7 821.4 L1416.4 815.5 L1410.8 810 L1405.2 804.9 L1399.4 800.2 L1393.6 796 L1387.7 792.4 L1381.8 789.2 L1376 786.7 L1370.2 784.7 L1364.5 783.2 L1359 782.4 L1353.7 782.2 L1348.6 782.5 L1343.7 783.5 L1339 785 L1334.7 787.1 L1330.7 789.8 L1327.1 793 L1323.8 796.8 L1320.9 801.1 L1318.5 805.8 L1316.5 811 L1314.9 816.6 L1313.7 822.6 L1313 829 L1312.8 835.6 L1313 842.5 L1313.7 849.7 L1314.9 857 L1316.5 864.5 L1318.5 872 L1320.9 879.6 L1323.8 887.2 L1327.1 894.7 L1330.7 902.2 L1334.7 909.5 L1339 916.6 L1343.7 923.4 L1348.6 930 L1353.7 936.3 L1359 942.2 L1364.5 947.8 L1370.2 952.9 L1376 957.5 L1381.8 961.7 L1387.7 965.4 L1393.6 968.5 L1399.4 971.1 L1405.2 973.1 L1410.8 974.5 L1416.4 975.3 L1421.7 975.6 L1426.8 975.2 L1431.7 974.3 L1436.3 972.7 L1440.7 970.6 L1444.7 967.9 L1448.3 964.7 L1451.6 960.9 L1454.4 956.7 L1456.9 951.9 L1458.9 946.7 L1460.5 941.1 L1461.7 935.1 L1462.4 928.8 L1462.6 922.1 Z" fill="#93b7cf" stroke="#15222b" stroke-width="1.4"/></g>
<path d="M1292 826 L1295.4 826.8 L1298.8 827.9 L1302.2 829.1 L1305.7 830.6 L1309.2 832.2 L1312.7 834.1 L1316.2 836.1 L1319.7 838.3 L1323.2 840.8 L1326.6 843.3 L1330.1 846.1 L1333.5 849 L1336.8 852.1 L1340.1 855.3 L1343.4 858.7 L1346.6 862.2 L1349.7 865.8 L1352.7 869.6 L1355.7 873.5 L1358.6 877.5 L1361.3 881.5 L1364 885.7 L1366.6 889.9 L1369 894.2 L1371.3 898.6 L1373.5 903 L1375.6 907.5 L1377.5 912 L1379.3 916.5 L1381 921 L1382.5 925.5 L1383.8 930 L1385 934.5 L1386.1 939 L1387 943.4 L1387.7 947.8 L1388.3 952.1 L1388.7 956.4 L1388.9 960.5 L1389 964.6 L1388.9 968.6 L1388.7 972.5 L1388.3 976.3 L1387.7 980 L1387 983.5 L1386.1 986.9 L1385 990.1 L1383.8 993.2 L1382.5 996.2 L1381 999 L1379.3 1001.6 L1377.5 1004 L1375.6 1006.3 L1373.5 1008.3 L1371.3 1010.2 L1369 1011.9 L1366.6 1013.4 L1364 1014.7 L1361.3 1015.8 L1358.6 1016.7 L1355.7 1017.3 L1352.7 1017.8 L1349.7 1018 L1346.6 1018.1 L1343.4 1017.9 L1340.1 1017.5 L1336.8 1016.9 L1333.5 1016.1 L1330.1 1015.1 L1326.6 1013.9 L1323.2 1012.5 L1319.7 1010.9 L1316.2 1009.1 L1312.7 1007 L1309.2 1004.9 L1305.7 1002.5 L1302.2 999.9 L1298.8 997.2 L1295.4 994.3 L1292 991.3" fill="none" stroke="#15222b" stroke-width="1.4" stroke-linecap="round" stroke-linejoin="round" />
<path d="M1141 911.4 L1292 826" fill="none" stroke="#15222b" stroke-width="1.4" stroke-linecap="round" stroke-linejoin="round" />
<path d="M1141 1077.2 L1292 991.2" fill="none" stroke="#15222b" stroke-width="1.4" stroke-linecap="round" stroke-linejoin="round" />
<path d="M1066.2 756.2 L1141.2 798.8 L1141 911.6 L1138 911.1 L1135 910.6 L1132.1 910.4 L1129.2 910.3 L1126.4 910.4 L1123.7 910.7 L1121 911.2 L1118.4 911.8 L1115.9 912.6 L1113.5 913.6 L1111.2 914.7 L1108.9 916 L1106.8 917.5 L1104.7 919.1 L1102.8 920.9 L1101 922.8 L1099.3 924.9 L1097.7 927.2 L1096.2 929.5 L1094.8 932.1 L1093.6 934.7 L1092.4 937.5 L1091.4 940.4 L1090.6 943.4 L1089.8 946.6 L1089.2 949.8 L1088.8 953.2 L1088.4 956.6 L1088.2 960.2 L1088.2 963.8 L1088.2 967.5 L1088.4 971.3 L1088.8 975.1 L1089.2 979 L1089.8 983 L1090.6 987 L1091.4 991 L1092.4 995 L1093.6 999.1 L1094.8 1003.2 L1096.2 1007.3 L1097.7 1011.4 L1099.3 1015.5 L1101 1019.6 L1102.8 1023.6 L1104.7 1027.6 L1106.8 1031.6 L1108.9 1035.6 L1111.2 1039.5 L1113.5 1043.3 L1115.9 1047.1 L1118.4 1050.7 L1121 1054.4 L1123.7 1057.9 L1126.4 1061.3 L1129.2 1064.7 L1132.1 1067.9 L1135 1071 L1138 1074.1 L1141 1077 L1141 1260.2 L1065.8 1216.5 Z" fill="#4F6778" stroke="#15222b" stroke-width="1.4" stroke-linejoin="round" />
<path d="M1117.1 828.2 L1117 826.1 L1116.6 823.9 L1116 821.6 L1115.2 819.2 L1114.2 816.9 L1113 814.7 L1111.7 812.5 L1110.2 810.5 L1108.6 808.7 L1106.9 807 L1105.1 805.6 L1103.3 804.4 L1101.5 803.5 L1099.7 802.9 L1098 802.6 L1096.4 802.6 L1094.9 802.8 L1093.6 803.4 L1092.4 804.3 L1091.4 805.5 L1090.6 806.9 L1090 808.5 L1089.6 810.3 L1089.5 812.3 L1089.6 814.5 L1090 816.7 L1090.6 819 L1091.4 821.4 L1092.4 823.7 L1093.6 825.9 L1094.9 828.1 L1096.4 830.1 L1098 831.9 L1099.7 833.6 L1101.5 835 L1103.3 836.2 L1105.1 837.1 L1106.9 837.7 L1108.6 838 L1110.2 838 L1111.7 837.8 L1113 837.2 L1114.2 836.3 L1115.2 835.1 L1116 833.7 L1116.6 832.1 L1117 830.3 L1117.1 828.2 Z" fill="url(#gHs2)" stroke="#15222b" stroke-width="1.4" stroke-linejoin="round" />
<path d="M1117.1 1134 L1117 1131.8 L1116.6 1129.6 L1116 1127.3 L1115.2 1124.9 L1114.2 1122.6 L1113 1120.4 L1111.7 1118.2 L1110.2 1116.2 L1108.6 1114.4 L1106.9 1112.7 L1105.1 1111.3 L1103.3 1110.1 L1101.5 1109.2 L1099.7 1108.6 L1098 1108.3 L1096.4 1108.3 L1094.9 1108.5 L1093.6 1109.1 L1092.4 1110 L1091.4 1111.2 L1090.6 1112.6 L1090 1114.2 L1089.6 1116 L1089.5 1118 L1089.6 1120.2 L1090 1122.4 L1090.6 1124.7 L1091.4 1127.1 L1092.4 1129.4 L1093.6 1131.6 L1094.9 1133.8 L1096.4 1135.8 L1098 1137.6 L1099.7 1139.3 L1101.5 1140.7 L1103.3 1141.9 L1105.1 1142.8 L1106.9 1143.4 L1108.6 1143.7 L1110.2 1143.7 L1111.7 1143.5 L1113 1142.9 L1114.2 1142 L1115.2 1140.8 L1116 1139.4 L1116.6 1137.8 L1117 1136 L1117.1 1134 Z" fill="url(#gHs3)" stroke="#15222b" stroke-width="1.4" stroke-linejoin="round" />
<path d="M1397.5 816.6 L1397.4 814.9 L1397.1 813 L1396.6 811.1 L1396 809.1 L1395.1 807.2 L1394.1 805.3 L1393 803.5 L1391.8 801.8 L1390.4 800.3 L1389 798.9 L1387.5 797.7 L1386 796.7 L1384.5 795.9 L1383 795.4 L1381.6 795.2 L1380.2 795.2 L1379 795.4 L1377.9 795.9 L1376.9 796.6 L1376 797.6 L1375.4 798.8 L1374.9 800.1 L1374.6 801.7 L1374.5 803.4 L1374.6 805.1 L1374.9 807 L1375.4 808.9 L1376 810.9 L1376.9 812.8 L1377.9 814.7 L1379 816.5 L1380.2 818.2 L1381.6 819.7 L1383 821.1 L1384.5 822.3 L1386 823.3 L1387.5 824.1 L1389 824.6 L1390.4 824.8 L1391.8 824.8 L1393 824.6 L1394.1 824.1 L1395.1 823.4 L1396 822.4 L1396.6 821.2 L1397.1 819.9 L1397.4 818.3 L1397.5 816.6 Z" fill="url(#gHs4)" stroke="#15222b" stroke-width="1.4" stroke-linejoin="round" />
<path d="M1446.1 801 L1450.1 803.1 L1454.3 804.9 L1458.8 806.4 L1463.6 807.7 L1468.6 808.8 L1473.7 809.5 L1479 810 L1484.2 810.1 L1489.5 810 L1494.8 809.5 L1499.9 808.8 L1504.9 807.7 L1509.7 806.4 L1514.2 804.9 L1518.4 803.1 L1522.4 801 L1522.4 1262.5 L1518.4 1264.6 L1514.2 1266.4 L1509.7 1267.9 L1504.9 1269.2 L1499.9 1270.3 L1494.8 1271 L1489.5 1271.5 L1484.2 1271.6 L1479 1271.5 L1473.7 1271 L1468.6 1270.3 L1463.6 1269.2 L1458.8 1267.9 L1454.3 1266.4 L1450.1 1264.6 L1446.1 1262.5 Z" fill="url(#gCol)" stroke="#15222b" stroke-width="1.4" stroke-linejoin="round" />
<path d="M1032 824 L1291.8 674 L1522.5 807 L1522.5 1107 Z" fill="#d5dfe6" opacity="0.075"/>
<path d="M1273 614.2 L1559.5 780 L1522.4 801 L1522.4 801 L1518.4 803.1 L1514.2 804.9 L1509.7 806.4 L1504.9 807.7 L1499.9 808.8 L1494.8 809.5 L1489.5 810 L1484.2 810.1 L1479 810 L1473.7 809.5 L1468.6 808.8 L1463.6 807.7 L1458.8 806.4 L1454.3 804.9 L1450.1 803.1 L1446.1 801 L1292 712 L1141.2 798.8 L1066.2 756.2 L1217.5 668 L1198.8 657.5 Z" fill="#8EBCD7" stroke="#15222b" stroke-width="1.4" stroke-linejoin="round" />
<ellipse cx="1484.2" cy="779.4" rx="18.9" ry="12" fill="#6f97b3" opacity="0.45" filter="url(#blur2)"/>
<ellipse cx="1484.2" cy="779.4" rx="16.4" ry="9.5" fill="url(#gZ5)" stroke="#15222b" stroke-width="1.4"/>
<circle cx="1484.5" cy="936.5" r="4.6" fill="#fff" stroke="#222" stroke-width="1.3"/><circle cx="1484.5" cy="936.5" r="1.6" fill="#222"/>
</svg>
<div id="hdr"></div>
<div class="t" style="left:16.0px;top:4.3px;font-size:30px;line-height:36.0px;color:#1a52b3;font-weight:bold;transform:scaleX(0.7634);-webkit-text-stroke:0.7px #1a52b3;">Onshape</div>
<svg style="left:141px;top:16px" width="22" height="22" viewBox="0 0 22 22"><rect x="0.5" y="1.6" width="20" height="3.4" fill="#2f2f2f"/><rect x="0.5" y="9.2" width="20" height="3.4" fill="#2f2f2f"/><rect x="0.5" y="16.8" width="20" height="3.3" fill="#2f2f2f"/></svg>
<svg style="left:178px;top:14px" width="30" height="28" viewBox="0 0 30 28"><circle cx="7.8" cy="7.1" r="4.3" fill="none" stroke="#2f2f2f" stroke-width="2"/><path d="M7.8 11.5 V22" stroke="#2f2f2f" stroke-width="2" fill="none"/><circle cx="7.8" cy="22.4" r="2.7" fill="#2f2f2f"/><path d="M7.8 17.8 H13 Q15.2 17.8 16 15.5 L16.6 13.6" stroke="#2f2f2f" stroke-width="2" fill="none"/><circle cx="16.6" cy="13.3" r="2.5" fill="#2f2f2f"/><path d="M15.7 4.7 H27.7 M20.9 11 H27.7 M20.9 17.1 H27.7 M15.7 23.5 H27.7" stroke="#6b6b6b" stroke-width="2.2"/></svg>
<svg style="left:224px;top:14px" width="28" height="28" viewBox="0 0 28 28"><rect x="6.2" y="2.4" width="2.5" height="2.3" fill="#2f2f2f"/><rect x="6.2" y="6" width="2.5" height="2.3" fill="#2f2f2f"/><circle cx="7.4" cy="13.4" r="3.7" fill="#2f2f2f"/><rect x="6.2" y="18.7" width="2.5" height="2.3" fill="#2f2f2f"/><rect x="6.2" y="22.5" width="2.5" height="2.3" fill="#2f2f2f"/><path d="M13.7 19.7 H23.7 M18.7 14.7 V24.7" stroke="#1a52b3" stroke-width="2.8"/></svg>
<div class="abs" style="left:755px;top:13px;width:24px;height:25px;background:#fff;border-radius:4px"></div>
<svg style="left:756px;top:14.5px" width="22" height="20" viewBox="0 0 22 20"><path d="M1 6.5 L11 2 L21 6.5 L11 11 Z" fill="#1a52b3"/><path d="M5 9.5 V14.5 Q11 18 17 14.5 V9.5 L11 12.3 Z" fill="#1a52b3"/><path d="M3.2 7.5 V15.5" stroke="#1a52b3" stroke-width="1.4"/><circle cx="3.2" cy="16" r="1.3" fill="#1a52b3"/></svg>
<svg style="left:1903px;top:15px" width="28" height="26" viewBox="0 0 28 26"><ellipse cx="14" cy="10.3" rx="12" ry="8.6" fill="#555"/><path d="M6 16 L2.5 23 L13 18 Z" fill="#555"/></svg>
<svg style="left:1946px;top:16px" width="26" height="26" viewBox="0 0 26 26"><path d="M3 19.5 Q6 16 6 10 Q6 3.5 12.5 3 Q19 3.5 19 10 Q19 16 22 19.5 Z" fill="#555"/><circle cx="12.5" cy="21.3" r="2.6" fill="#555"/></svg>
<div class="abs" style="left:1960px;top:8px;width:20px;height:20px;background:#1a50b0;border-radius:3px"></div>
<div class="t" style="left:1965.5px;top:10.5px;font-size:13px;line-height:15px;font-weight:bold;color:#fff">2</div>
<svg style="left:2362px;top:14px" width="42" height="26" viewBox="0 0 42 26"><circle cx="12.5" cy="12.5" r="11.5" fill="#4a4a4a"/><text x="12.5" y="18.6" text-anchor="middle" font-family="Liberation Sans, sans-serif" font-weight="bold" font-size="17" fill="#fff">?</text><path d="M28.5 10.5 H38.5 L33.5 15.8 Z" fill="#333"/></svg>
<svg style="left:2418px;top:11px" width="32" height="32" viewBox="0 0 32 32"><defs><clipPath id="av"><circle cx="16" cy="16" r="15.5"/></clipPath></defs><circle cx="16" cy="16" r="15.5" fill="#1a50b0"/><g clip-path="url(#av)"><circle cx="16" cy="14" r="7.3" fill="#fff"/><ellipse cx="16" cy="31" rx="11.5" ry="10.5" fill="#fff"/></g></svg>
<svg style="left:2540px;top:22px" width="12" height="8" viewBox="0 0 12 8"><path d="M0.5 1 H10.5 L5.5 6.5 Z" fill="#333"/></svg>
<div class="t" style="left:273.0px;top:9.1px;font-size:29px;line-height:34.8px;color:#2f2f2f;font-weight:bold;transform:scaleX(0.9236);">Touch-Less Hand Sanitizer V7</div>
<div class="t" style="left:665.0px;top:19.2px;font-size:19px;line-height:22.8px;color:#848484;transform:scaleX(1.0441);">Main</div>
<div class="btn" style="left:1985px;width:107px"></div>
<div class="t" style="left:2001.0px;top:15.5px;font-size:17.5px;line-height:21.0px;color:#2b2b2b;transform:scaleX(0.9893);">App Store</div>
<div class="btn" style="left:2104px;width:154px"></div>
<div class="t" style="left:2120.0px;top:15.5px;font-size:17.5px;line-height:21.0px;color:#2b2b2b;transform:scaleX(0.9880);">Learning Center</div>
<div class="btn" style="left:2270px;width:76px;background:#1a50b0;border-color:#1a50b0"></div>
<div class="t" style="left:2287.0px;top:15.5px;font-size:17.5px;line-height:21.0px;color:#fff;font-weight:bold;transform:scaleX(0.9252);">Share</div>
<div class="t" style="left:2453.0px;top:16.0px;font-size:17.5px;line-height:21.0px;color:#2b2b2b;transform:scaleX(0.9919);">nikolas550</div>
<div id="tb"></div>
<div class="sep" style="left:89px"></div>
<div class="sep" style="left:199px"></div>
<div class="sep" style="left:438px"></div>
<div class="sep" style="left:700px"></div>
<div class="sep" style="left:812px"></div>
<div class="sep" style="left:1008px"></div>
<div class="sep" style="left:1185px"></div>
<div class="sep" style="left:1531px"></div>
<div class="sep" style="left:1875px"></div>
<svg style="left:11px;top:62px" width="22" height="22" viewBox="0 0 22 22"><path d="M1 9 L9.5 1.5 V6 Q17.5 6.5 17.5 14 Q17.5 18 15 21 Q15.5 12.5 9.5 12 V16.5 Z" fill="#9b9b9b"/></svg>
<svg style="left:55px;top:62px" width="22" height="22" viewBox="0 0 22 22"><g transform="translate(20,0) scale(-1,1)"><path d="M1 9 L9.5 1.5 V6 Q17.5 6.5 17.5 14 Q17.5 18 15 21 Q15.5 12.5 9.5 12 V16.5 Z" fill="#9b9b9b"/></g></svg>
<svg style="left:100px;top:60px" width="26" height="26" viewBox="0 0 26 26"><path d="M3.3 21.6 L5.8 15.8 L18.6 3.3 L22.8 7.1 L9.3 19.6 Z" fill="#fff" stroke="#3d3d3d" stroke-width="1.3" stroke-linejoin="round" stroke-linecap="round"/><path d="M5.8 15.8 L9.3 19.6 M16.3 5.6 L20.4 9.3" fill="none" stroke="#3d3d3d" stroke-width="1.3" stroke-linejoin="round" stroke-linecap="round"/><path d="M3.3 21.6 L4.6 18.7 L6.3 20.5 Z" fill="#333"/><path d="M1 23 H24" stroke="#3b6fd0" stroke-width="1.6"/></svg>
<svg style="left:211px;top:60px" width="24" height="24" viewBox="0 0 24 24"><path d="M1 1.5 L4.5 5.0 L4.5 23.5 L1 20.0 Z" fill="#fff" stroke="#3d3d3d" stroke-width="1.3" stroke-linejoin="round" stroke-linecap="round"/><path d="M1 1.5 L19.5 1.5 L23 5.0 L4.5 5.0 Z" fill="#fff" stroke="#3d3d3d" stroke-width="1.3" stroke-linejoin="round" stroke-linecap="round"/><rect x="4.5" y="5.0" width="18.5" height="18.5" fill="#fff" stroke="#3d3d3d" stroke-width="1.3" stroke-linejoin="round" stroke-linecap="round"/><path d="M7.5 9.5 L10.5 12.5 L10.5 23.5 L7.5 20.5 Z" fill="#888" stroke="#3d3d3d" stroke-width="1.3" stroke-linejoin="round" stroke-linecap="round"/><path d="M7.5 9.5 L20 9.5 L23 12.5 L10.5 12.5 Z" fill="#b5b5b5" stroke="#3d3d3d" stroke-width="1.3" stroke-linejoin="round" stroke-linecap="round"/><rect x="10.5" y="12.5" width="12.5" height="11.0" fill="#9a9a9a" stroke="#3d3d3d" stroke-width="1.3" stroke-linejoin="round" stroke-linecap="round"/></svg>
<svg style="left:254px;top:60px" width="24" height="24" viewBox="0 0 24 24"><path d="M20.1 6 A10.5 10.5 0 1 0 20.1 18 L14.6 14.2 A3.8 3.8 0 1 1 14.6 9.8 Z" fill="#9a9a9a" stroke="#3d3d3d" stroke-width="1.3" stroke-linejoin="round" stroke-linecap="round"/><ellipse cx="17.4" cy="7.9" rx="3.4" ry="1.7" transform="rotate(-55 17.4 7.9)" fill="#fff" stroke="#3d3d3d" stroke-width="1.3" stroke-linejoin="round" stroke-linecap="round"/><ellipse cx="17.4" cy="16.1" rx="3.4" ry="1.7" transform="rotate(55 17.4 16.1)" fill="#fff" stroke="#3d3d3d" stroke-width="1.3" stroke-linejoin="round" stroke-linecap="round"/><path d="M1 12 H4 M7.7 12 H10 M12 12 H15 M17 12 H20 M21.5 12 H23.5" stroke="#3d3d3d" stroke-width="1.1"/></svg>
<svg style="left:296px;top:60px" width="24" height="24" viewBox="0 0 24 24"><path d="M2 19.5 Q2 11.5 9 11 Q14.5 10.8 16 7 Q16.5 2.8 20.3 2.4 Q24 3 23.3 6.5 Q22 15 13 15.6 Q9.5 16 9.3 20 Q8.8 24 5.5 23.6 Q2 23.2 2 19.5 Z" fill="#9a9a9a" stroke="#3d3d3d" stroke-width="1.3" stroke-linejoin="round" stroke-linecap="round"/><ellipse cx="20.4" cy="4.7" rx="3.1" ry="2.2" fill="#fff" stroke="#3d3d3d" stroke-width="1.3" stroke-linejoin="round" stroke-linecap="round"/></svg>
<svg style="left:338px;top:60px" width="24" height="24" viewBox="0 0 24 24"><path d="M6.7 4.5 Q6.3 14 1.5 21 L12 23.5 L22.5 21 Q17.7 14 17.3 4.5 Z" fill="#9a9a9a" stroke="#3d3d3d" stroke-width="1.3" stroke-linejoin="round" stroke-linecap="round"/><ellipse cx="12" cy="4.5" rx="5.3" ry="2.2" fill="#fff" stroke="#3d3d3d" stroke-width="1.3" stroke-linejoin="round" stroke-linecap="round"/></svg>
<svg style="left:381px;top:60px" width="24" height="24" viewBox="0 0 24 24"><path d="M1.5 5.5 Q6 7.5 10 4.5 Q14 1.5 18.5 3.5 L22.5 7.5 V20 Q19 18.5 15.5 20.5 Q11.5 22.5 7 23 L1.5 18.5 Z" fill="#9a9a9a" stroke="#3d3d3d" stroke-width="1.3" stroke-linejoin="round" stroke-linecap="round"/><path d="M7 9.5 Q11 8.5 14.5 7 Q19 5.5 22.5 7.5 M7 9.5 V23 M7 9.5 L1.5 5.5" fill="none" stroke="#3d3d3d" stroke-width="1.3" stroke-linejoin="round" stroke-linecap="round"/><path d="M9.5 13 H19.5 L14.5 19.5 Z" fill="#fff" stroke="#fff" stroke-width="1"/><path d="M14.5 6.5 V15" stroke="#222" stroke-width="2.2"/><path d="M10.8 12.8 L14.5 17.5 L18.2 12.8 Z" fill="#222"/></svg>
<svg style="left:416px;top:64px" width="16" height="16" viewBox="0 0 16 16"><path d="M2 5 L8 11 L14 5" fill="none" stroke="#555" stroke-width="2.5"/></svg>
<svg style="left:451px;top:60px" width="24" height="24" viewBox="0 0 24 24"><path d="M1.5 12 Q2 2 12 1.5 H19 L23 5.5 V23.5 H5.5 L1.5 19.5 Z" fill="#fff" stroke="#3d3d3d" stroke-width="1.3" stroke-linejoin="round" stroke-linecap="round"/><path d="M1.5 12 Q2 2 12 1.5 L15.5 5.5 Q6.5 6.5 5.5 15.5 Z" fill="#9a9a9a" stroke="#3d3d3d" stroke-width="1.3" stroke-linejoin="round" stroke-linecap="round"/><path d="M15.5 5.5 H23 M5.5 15.5 V23.5" fill="none" stroke="#3d3d3d" stroke-width="1.3" stroke-linejoin="round" stroke-linecap="round"/></svg>
<svg style="left:493px;top:60px" width="24" height="24" viewBox="0 0 24 24"><path d="M1.5 11 L11 1.5 H19 L23 5.5 V23.5 H5.5 L1.5 19.5 Z" fill="#fff" stroke="#3d3d3d" stroke-width="1.3" stroke-linejoin="round" stroke-linecap="round"/><path d="M1.5 11 L11 1.5 L14.5 5.5 L5.5 14.5 Z" fill="#9a9a9a" stroke="#3d3d3d" stroke-width="1.3" stroke-linejoin="round" stroke-linecap="round"/><path d="M14.5 5.5 H23 M5.5 14.5 V23.5" fill="none" stroke="#3d3d3d" stroke-width="1.3" stroke-linejoin="round" stroke-linecap="round"/></svg>
<svg style="left:536px;top:60px" width="24" height="24" viewBox="0 0 24 24"><path d="M9.5 1.5 H19.5 L23 5 V23.5 H5.5 L1.5 19.5 Z" fill="#9a9a9a" stroke="#3d3d3d" stroke-width="1.3" stroke-linejoin="round" stroke-linecap="round"/><path d="M9.5 1.5 L13 5 H23 M13 5 L5.5 23.5" fill="none" stroke="#3d3d3d" stroke-width="1.3" stroke-linejoin="round" stroke-linecap="round"/><path d="M9.5 1.5 H19.5 L23 5 H13 Z" fill="#fff" stroke="#3d3d3d" stroke-width="1.3" stroke-linejoin="round" stroke-linecap="round"/></svg>
<svg style="left:578px;top:60px" width="24" height="24" viewBox="0 0 24 24"><path d="M14 1.5 H19 L23.5 6 V23.5 H6.5 L1.5 18.5 V14 H4.5 Z" fill="#fff" stroke="#3d3d3d" stroke-width="1.3" stroke-linejoin="round" stroke-linecap="round"/><path d="M6.500 18.5 L17.5 6 V18.5 Z" fill="#9a9a9a" stroke="none"/><path d="M4.5 14 L14 1.5 L17.5 6 L6.5 18.5 Z" fill="#ccc" stroke="#3d3d3d" stroke-width="1.3" stroke-linejoin="round" stroke-linecap="round"/><path d="M17.5 6 H23.5 M6.5 18.5 V23.5 M1.5 14 L6.500 18.5 H17.5 V6" fill="none" stroke="#3d3d3d" stroke-width="1.3" stroke-linejoin="round" stroke-linecap="round"/></svg>
<svg style="left:621px;top:60px" width="24" height="24" viewBox="0 0 24 24"><path d="M1 1.5 L5 5.5 L5 23.5 L1 19.5 Z" fill="#fff" stroke="#3d3d3d" stroke-width="1.3" stroke-linejoin="round" stroke-linecap="round"/><path d="M1 1.5 L19 1.5 L23 5.5 L5 5.5 Z" fill="#fff" stroke="#3d3d3d" stroke-width="1.3" stroke-linejoin="round" stroke-linecap="round"/><rect x="5" y="5.5" width="18" height="18.0" fill="#fff" stroke="#3d3d3d" stroke-width="1.3" stroke-linejoin="round" stroke-linecap="round"/><path d="M7.5 2.500 H16.5 L18.5 5.500 V19.5 H8.500 V5.500 Z" fill="#9a9a9a" stroke="#3d3d3d" stroke-width="1.3" stroke-linejoin="round" stroke-linecap="round"/><path d="M8.500 17.5 H16.5 V5.5" fill="none" stroke="#777" stroke-width="1"/></svg>
<svg style="left:664px;top:60px" width="24" height="24" viewBox="0 0 24 24"><path d="M1 1.5 L5 5.5 L5 23.5 L1 19.5 Z" fill="#fff" stroke="#3d3d3d" stroke-width="1.3" stroke-linejoin="round" stroke-linecap="round"/><path d="M1 1.5 L19 1.5 L23 5.5 L5 5.5 Z" fill="#fff" stroke="#3d3d3d" stroke-width="1.3" stroke-linejoin="round" stroke-linecap="round"/><rect x="5" y="5.5" width="18" height="18.0" fill="#fff" stroke="#3d3d3d" stroke-width="1.3" stroke-linejoin="round" stroke-linecap="round"/><circle cx="14.2" cy="14.5" r="6.2" fill="#9a9a9a" stroke="#3d3d3d" stroke-width="1.3" stroke-linejoin="round" stroke-linecap="round"/><circle cx="14.8" cy="15" r="4.600" fill="#8a8a8a" stroke="#3d3d3d" stroke-width="1.3" stroke-linejoin="round" stroke-linecap="round"/><circle cx="13" cy="13" r="1.600" fill="#c8c8c8"/></svg>
<svg style="left:711px;top:60px" width="24" height="24" viewBox="0 0 24 24"><path d="M1 1.5 L3 3.5 L3 12.5 L1 10.5 Z" fill="#fff" stroke="#3d3d3d" stroke-width="1.3" stroke-linejoin="round" stroke-linecap="round"/><path d="M1 1.5 L10.5 1.5 L12.5 3.5 L3 3.5 Z" fill="#fff" stroke="#3d3d3d" stroke-width="1.3" stroke-linejoin="round" stroke-linecap="round"/><rect x="3" y="3.5" width="9.5" height="9.0" fill="#fff" stroke="#3d3d3d" stroke-width="1.3" stroke-linejoin="round" stroke-linecap="round"/><path d="M12 1.5 L14 3.5 L14 12.5 L12 10.5 Z" fill="#9a9a9a" stroke="#3d3d3d" stroke-width="1.3" stroke-linejoin="round" stroke-linecap="round"/><path d="M12 1.5 L21.5 1.5 L23.5 3.5 L14 3.5 Z" fill="#b0b0b0" stroke="#3d3d3d" stroke-width="1.3" stroke-linejoin="round" stroke-linecap="round"/><rect x="14" y="3.5" width="9.5" height="9.0" fill="#9a9a9a" stroke="#3d3d3d" stroke-width="1.3" stroke-linejoin="round" stroke-linecap="round"/><path d="M1 12.5 L3 14.5 L3 23.5 L1 21.5 Z" fill="#9a9a9a" stroke="#3d3d3d" stroke-width="1.3" stroke-linejoin="round" stroke-linecap="round"/><path d="M1 12.5 L10.5 12.5 L12.5 14.5 L3 14.5 Z" fill="#b0b0b0" stroke="#3d3d3d" stroke-width="1.3" stroke-linejoin="round" stroke-linecap="round"/><rect x="3" y="14.5" width="9.5" height="9.0" fill="#9a9a9a" stroke="#3d3d3d" stroke-width="1.3" stroke-linejoin="round" stroke-linecap="round"/><path d="M12 12.5 L14 14.5 L14 23.5 L12 21.5 Z" fill="#9a9a9a" stroke="#3d3d3d" stroke-width="1.3" stroke-linejoin="round" stroke-linecap="round"/><path d="M12 12.5 L21.5 12.5 L23.5 14.5 L14 14.5 Z" fill="#b0b0b0" stroke="#3d3d3d" stroke-width="1.3" stroke-linejoin="round" stroke-linecap="round"/><rect x="14" y="14.5" width="9.5" height="9.0" fill="#9a9a9a" stroke="#3d3d3d" stroke-width="1.3" stroke-linejoin="round" stroke-linecap="round"/></svg>
<svg style="left:747px;top:64px" width="16" height="16" viewBox="0 0 16 16"><path d="M2 5 L8 11 L14 5" fill="none" stroke="#555" stroke-width="2.5"/></svg>
<svg style="left:776px;top:60px" width="24" height="24" viewBox="0 0 24 24"><path d="M1.5 1.5 H5.5 L9.5 5.5 V15 H12.5 V23.5 H5.5 L1.5 19.5 Z" fill="#fff" stroke="#3d3d3d" stroke-width="1.3" stroke-linejoin="round" stroke-linecap="round"/><path d="M5.5 5.500 V23 M1.5 1.5 L5.5 5.500 H9.5" fill="none" stroke="#3d3d3d" stroke-width="1.3" stroke-linejoin="round" stroke-linecap="round"/><path d="M8 2 L15 9 V20 L8 13 Z" fill="#cfcfcf" opacity="0.85"/><path d="M15.5 1.5 H19.5 L23.5 5.5 V23.5 H16 V15 H19.5 V5.500 Z" fill="#9a9a9a" stroke="#3d3d3d" stroke-width="1.3" stroke-linejoin="round" stroke-linecap="round"/></svg>
<svg style="left:823px;top:60px" width="24" height="24" viewBox="0 0 24 24"><circle cx="8.8" cy="12.5" r="7.8" fill="#fff" stroke="#3d3d3d" stroke-width="1.3" stroke-linejoin="round" stroke-linecap="round"/><circle cx="16" cy="12.5" r="7.8" fill="#9a9a9a" fill-opacity="0.95" stroke="#3d3d3d" stroke-width="1.3" stroke-linejoin="round" stroke-linecap="round"/><circle cx="8.800" cy="12.5" r="7.8" fill="none" stroke="#3d3d3d" stroke-width="1.3" stroke-linejoin="round" stroke-linecap="round"/></svg>
<svg style="left:866px;top:60px" width="24" height="24" viewBox="0 0 24 24"><path d="M1 2 L5.5 6.5 L5.5 22.5 L1 18.0 Z" fill="#fff" stroke="#3d3d3d" stroke-width="1.3" stroke-linejoin="round" stroke-linecap="round"/><path d="M1 2 L19.0 2 L23.5 6.5 L5.5 6.5 Z" fill="#fff" stroke="#3d3d3d" stroke-width="1.3" stroke-linejoin="round" stroke-linecap="round"/><rect x="5.5" y="6.5" width="18.0" height="16.0" fill="#fff" stroke="#3d3d3d" stroke-width="1.3" stroke-linejoin="round" stroke-linecap="round"/><path d="M0.5 10.5 Q3 13 5.5 14.5 Q10 17 15 14 Q20 11.500 24 12.5" fill="none" stroke="#bdbdbd" stroke-width="1.6"/></svg>
<svg style="left:908px;top:60px" width="24" height="24" viewBox="0 0 24 24"><path d="M1 11 L4 14 L4 23.5 L1 20.5 Z" fill="#fff" stroke="#3d3d3d" stroke-width="1.3" stroke-linejoin="round" stroke-linecap="round"/><path d="M1 11 L10 11 L13 14 L4 14 Z" fill="#fff" stroke="#3d3d3d" stroke-width="1.3" stroke-linejoin="round" stroke-linecap="round"/><rect x="4" y="14" width="9" height="9.5" fill="#fff" stroke="#3d3d3d" stroke-width="1.3" stroke-linejoin="round" stroke-linecap="round"/><path d="M17.5 1.5 L23.5 6.5 L18 14.5 L12 9.5 Z" fill="#9a9a9a" stroke="#3d3d3d" stroke-width="1.3" stroke-linejoin="round" stroke-linecap="round"/><path d="M12 9.5 L17.8 7.2 L23.5 6.5 M17.8 7.2 L18 14.5" fill="none" stroke="#3d3d3d" stroke-width="1.3" stroke-linejoin="round" stroke-linecap="round"/><path d="M4 9 Q4.5 4 8.500 2" fill="none" stroke="#222" stroke-width="1.6"/><path d="M6.5 0.5 L11.5 1 L8.5 5 Z" fill="#222"/><path d="M23 15.5 Q22.500 20 19 22" fill="none" stroke="#222" stroke-width="1.6"/><path d="M21 23.5 L16 23 L19 19 Z" fill="#222"/></svg>
<svg style="left:944px;top:64px" width="16" height="16" viewBox="0 0 16 16"><path d="M2 5 L8 11 L14 5" fill="none" stroke="#555" stroke-width="2.5"/></svg>
<svg style="left:973px;top:60px" width="24" height="24" viewBox="0 0 24 24"><path d="M1.5 4 L4 2 H17 L19.500 4 V20 H4 L1.5 18 Z" fill="#b8b8b8"/><rect x="4" y="5" width="15.5" height="15" fill="#9a9a9a"/><circle cx="16.5" cy="17.5" r="6.3" fill="#2b2b2b" stroke="#fff" stroke-width="1.2"/><path d="M14.0 15.0 l5 5 m0 -5 l-5 5" stroke="#fff" stroke-width="1.8" fill="none"/></svg>
<svg style="left:1022px;top:60px" width="24" height="24" viewBox="0 0 24 24"><path d="M1.500 16 Q2.500 5 14 1.5 Q18 3 20 6.500 Q11 9 8.5 21.5 Q4 20 1.500 16 Z" fill="#9a9a9a"/><path d="M11 18.500 Q13 11.500 21 9.5 L23.5 13.500 Q17 16 14.500 23 Z" fill="#fff" stroke="#3d3d3d" stroke-width="1.3" stroke-linejoin="round" stroke-linecap="round"/><path d="M9.5 7.5 L16.5 9.5 L14.200 11 L18 15.500 L16 17 L12.500 12.600 L10.500 14.500 Z" fill="#222"/></svg>
<svg style="left:1064px;top:60px" width="24" height="24" viewBox="0 0 24 24"><path d="M1.5 7 Q6 9 10 5 Q14 1 18.500 2.500 L22.500 12 Q19 11 16 14 Q12 18.500 7 17.500 Z" fill="#9a9a9a"/><circle cx="16.5" cy="17.5" r="6.3" fill="#2b2b2b" stroke="#fff" stroke-width="1.2"/><path d="M14.0 15.0 l5 5 m0 -5 l-5 5" stroke="#fff" stroke-width="1.8" fill="none"/></svg>
<svg style="left:1106px;top:60px" width="24" height="24" viewBox="0 0 24 24"><path d="M1.5 11.500 L7 8.500 Q11 10.500 14.500 8 Q18 6 20 8 L23.5 13 V22.500 H7 L1.5 18.500 Z" fill="#fff" stroke="#3d3d3d" stroke-width="1.3" stroke-linejoin="round" stroke-linecap="round"/><path d="M1.5 11.500 L7 8.500 Q11 10.500 14.500 8 Q18 6 20 8 L23.5 13 Q20 11.500 16.500 13.500 Q12 16 7 15.500 Z" fill="#9a9a9a" stroke="#3d3d3d" stroke-width="1.3" stroke-linejoin="round" stroke-linecap="round"/><path d="M7 15.500 V22.500" fill="none" stroke="#3d3d3d" stroke-width="1.3" stroke-linejoin="round" stroke-linecap="round"/><path d="M12.500 4.500 V12" stroke="#fff" stroke-width="4.5"/><path d="M12.500 5 V12" stroke="#222" stroke-width="2.200"/><path d="M8.500 6 L12.500 0.800 L16.500 6 Z" fill="#222" stroke="#fff" stroke-width="0.8"/></svg>
<svg style="left:1148px;top:60px" width="24" height="24" viewBox="0 0 24 24"><path d="M1 11 L5.5 15.5 L5.5 23 L1 18.5 Z" fill="#fff" stroke="#3d3d3d" stroke-width="1.3" stroke-linejoin="round" stroke-linecap="round"/><path d="M1 11 L19.0 11 L23.5 15.5 L5.5 15.5 Z" fill="#fff" stroke="#3d3d3d" stroke-width="1.3" stroke-linejoin="round" stroke-linecap="round"/><rect x="5.5" y="15.5" width="18.0" height="7.5" fill="#fff" stroke="#3d3d3d" stroke-width="1.3" stroke-linejoin="round" stroke-linecap="round"/><path d="M3 3.500 Q8 5 12 2.500 Q16 0.5 19.500 2 L23 8 Q19 6.500 15.500 8.500 Q11 11 6.500 9.500 Z" fill="#9a9a9a"/></svg>
<svg style="left:1196px;top:60px" width="24" height="24" viewBox="0 0 24 24"><path d="M3 6 L6 2.500 H12 L10.500 6 Q12 14 10.500 22.500 H3 Z" fill="#fff" stroke="#3d3d3d" stroke-width="1.3" stroke-linejoin="round" stroke-linecap="round"/><path d="M3 6 H10.500" fill="none" stroke="#3d3d3d" stroke-width="1.3" stroke-linejoin="round" stroke-linecap="round"/><path d="M14.500 4.500 L19 1.500 Q20 9 23 15 L17 23.500 Q15 14 14.500 4.500 Z" fill="#9a9a9a"/><path d="M10.500 6 Q12.500 4 14.500 4.500 Q15 14 17 23.500 L10.500 22.500 Q12 14 10.500 6" fill="#b5b5b5" stroke="none"/></svg>
<svg style="left:1231px;top:64px" width="16" height="16" viewBox="0 0 16 16"><path d="M2 5 L8 11 L14 5" fill="none" stroke="#555" stroke-width="2.5"/></svg>
<svg style="left:1261px;top:60px" width="24" height="24" viewBox="0 0 24 24"><path d="M2 2 L23 5 V23 L2 20 Z" fill="#d9d9d9" stroke="#3d3d3d" stroke-width="1.3" stroke-linejoin="round" stroke-linecap="round" stroke-width="1.5"/><path d="M12 3.500 V13.500 L23 15" fill="none" stroke="#3d3d3d" stroke-width="1.3" stroke-linejoin="round" stroke-linecap="round"/></svg>
<svg style="left:1303px;top:60px" width="24" height="24" viewBox="0 0 24 24"><path d="M21 4 Q12 0.500 5 3.500 Q1 6 6 8 Q13 10 21 8 Q24 6.500 20 5 M6 8 Q1 10.500 6 13 Q13 15 21 13 Q24 11.500 20 10 M6 13 Q1 15.500 6 18 Q13 20 21 18 Q24 16.500 20 15 M6 18 Q3 19.500 2 22" fill="none" stroke="#2b2b2b" stroke-width="1.700" stroke-linecap="round"/></svg>
<svg style="left:1339px;top:64px" width="16" height="16" viewBox="0 0 16 16"><path d="M2 5 L8 11 L14 5" fill="none" stroke="#555" stroke-width="2.5"/></svg>
<svg style="left:1369px;top:60px" width="24" height="24" viewBox="0 0 24 24"><circle cx="12" cy="12" r="11" fill="#fff" stroke="#3d3d3d" stroke-width="1.3" stroke-linejoin="round" stroke-linecap="round" stroke-width="1.5"/><circle cx="12" cy="12" r="8.700" fill="#fff" stroke="#3d3d3d" stroke-width="1.3" stroke-linejoin="round" stroke-linecap="round"/><path d="M12 3.300 A8.700 8.700 0 0 1 20.700 12 H12 Z" fill="#e6e6e6" stroke="#3d3d3d" stroke-width="1.3" stroke-linejoin="round" stroke-linecap="round"/></svg>
<svg style="left:1411px;top:60px" width="24" height="24" viewBox="0 0 24 24"><path d="M3 12 L7 9 H13 V3 L17 0.500 H21.500 L23.500 3 V22.500 H7 L3 19.500 Z" fill="#fff" stroke="#3d3d3d" stroke-width="1.3" stroke-linejoin="round" stroke-linecap="round"/><path d="M3 12 L7 14.500 H17 V5.500 H23.500 M7 14.500 V22.500 M17 5.500 L13 3 M17 14.500 L13 12" fill="none" stroke="#3d3d3d" stroke-width="1.3" stroke-linejoin="round" stroke-linecap="round"/><path d="M7 14.500 H17 V5.500 L13 3 V9 H7 L3 12 Z" fill="#e3e3e3" stroke="#3d3d3d" stroke-width="1.3" stroke-linejoin="round" stroke-linecap="round"/><path d="M2 2 Q9 1 11 7" fill="none" stroke="#222" stroke-width="1.800"/><path d="M7.500 6.500 L12.500 11.500 L14 5 Z" fill="#222"/></svg>
<div class="t" style="left:1451px;top:58px;font-family:'Liberation Serif',serif;font-size:25px;line-height:28px;font-weight:bold;color:#2b2b2b;font-style:italic;letter-spacing:-0.5px"><span style="font-style:normal;font-weight:bold;font-family:'Liberation Sans',sans-serif;font-size:23px">(</span>x<span style="font-style:normal;font-weight:bold;font-family:'Liberation Sans',sans-serif;font-size:23px">)</span></div>
<svg style="left:1496px;top:60px" width="24" height="24" viewBox="0 0 24 24"><path d="M7 4 l5 -2.75 l5 2.75 v5.5 l-5 2.75 l-5 -2.75 Z" fill="#fff" stroke="#3d3d3d" stroke-width="1.3" stroke-linejoin="round" stroke-linecap="round"/><path d="M7 4 l5 2.75 l5 -2.75 M12 6.75 v5.5" fill="none" stroke="#3d3d3d" stroke-width="1.3" stroke-linejoin="round" stroke-linecap="round" stroke-width="1"/><path d="M1.5 13.5 l5 -2.75 l5 2.75 v5.5 l-5 2.75 l-5 -2.75 Z" fill="#fff" stroke="#3d3d3d" stroke-width="1.3" stroke-linejoin="round" stroke-linecap="round"/><path d="M1.5 13.5 l5 2.75 l5 -2.75 M6.5 16.25 v5.5" fill="none" stroke="#3d3d3d" stroke-width="1.3" stroke-linejoin="round" stroke-linecap="round" stroke-width="1"/><path d="M12.5 13.5 l5 -2.75 l5 2.75 v5.5 l-5 2.75 l-5 -2.75 Z" fill="#fff" stroke="#3d3d3d" stroke-width="1.3" stroke-linejoin="round" stroke-linecap="round"/><path d="M12.5 13.5 l5 2.75 l5 -2.75 M17.5 16.25 v5.5" fill="none" stroke="#3d3d3d" stroke-width="1.3" stroke-linejoin="round" stroke-linecap="round" stroke-width="1"/></svg>
<svg style="left:1542px;top:60px" width="24" height="24" viewBox="0 0 24 24"><path d="M1.500 7 Q1.500 3.500 5 3.500 H11 V1.500 L14.500 0.500 L21.500 7 V19.500 Q21.500 23 18 23 H8.500 L1.500 17 Z" fill="#ededed" stroke="#3d3d3d" stroke-width="1.3" stroke-linejoin="round" stroke-linecap="round"/><path d="M5.500 4 V14.500 L11 14.500 V1.500 M5.500 14.500 L11.500 20 H18.500 L11 14.500 M18.500 20 Q19 20 19 17.500 V6" fill="none" stroke="#3d3d3d" stroke-width="1.3" stroke-linejoin="round" stroke-linecap="round"/><path d="M11 14.500 L18.500 20 H11.500 L5.500 14.500 Z" fill="#9a9a9a"/></svg>
<svg style="left:1585px;top:60px" width="24" height="24" viewBox="0 0 24 24"><path d="M1 14 L10 14 L14 10 V1.500 L15.500 0.500 L21.500 6 V19 Q21.500 22.500 18 22.500 H7 Z" fill="#ededed" stroke="#3d3d3d" stroke-width="1.3" stroke-linejoin="round" stroke-linecap="round"/><path d="M14 10 L21.500 16.500 M14 1.500 L14 10" fill="none" stroke="#3d3d3d" stroke-width="1.3" stroke-linejoin="round" stroke-linecap="round"/><path d="M14 1.500 L15.500 0.500 L21.500 6 V19 Q21.500 22.500 18 22.500 L21 18 V16 L14 10 Z" fill="#9a9a9a" stroke="#3d3d3d" stroke-width="1.3" stroke-linejoin="round" stroke-linecap="round"/></svg>
<svg style="left:1628px;top:60px" width="24" height="24" viewBox="0 0 24 24"><path d="M1 13.500 L5 10.500 H13 L4.500 4 H12 L21.500 11.500 Q24.500 14.500 23 18 Q22 20.500 19 20.500 H8.500 Z" fill="#ededed" stroke="#3d3d3d" stroke-width="1.3" stroke-linejoin="round" stroke-linecap="round"/><path d="M4.500 4 H12 L21.500 11.500 Q23.500 13.500 22.500 16 L13 10.500 Z" fill="#9a9a9a" stroke="#3d3d3d" stroke-width="1.3" stroke-linejoin="round" stroke-linecap="round"/><path d="M1 13.500 H13.500 L19.500 18" fill="none" stroke="#3d3d3d" stroke-width="1.3" stroke-linejoin="round" stroke-linecap="round"/></svg>
<svg style="left:1671px;top:60px" width="24" height="24" viewBox="0 0 24 24"><path d="M2 23 V14 H8 V11.500 H5.500 Q2.500 11 2.500 6.500 Q2.500 1 8 1 H21.500 V23 Z" fill="#ededed" stroke="#3d3d3d" stroke-width="1.3" stroke-linejoin="round" stroke-linecap="round"/><path d="M2 23 V14 H8 V11.500 H5.500 Q2.500 11 2.500 6.500 Q2.500 1 8 1 H13 V8 H13.500 V17.500 H9 V23 Z" fill="#9a9a9a" stroke="#3d3d3d" stroke-width="1.3" stroke-linejoin="round" stroke-linecap="round"/></svg>
<svg style="left:1713px;top:60px" width="24" height="24" viewBox="0 0 24 24"><path d="M1.500 2 L10 9.500 V21 L1.500 13.500 Z" fill="#ededed" stroke="#3d3d3d" stroke-width="1.3" stroke-linejoin="round" stroke-linecap="round"/><path d="M22.500 2 L14 9.500 V21 L22.500 13.500 Z" fill="#ededed" stroke="#3d3d3d" stroke-width="1.3" stroke-linejoin="round" stroke-linecap="round"/><path d="M10 9.500 L12 12 L14 9.500 V21 L12 23.500 L10 21 Z" fill="#9a9a9a" stroke="#3d3d3d" stroke-width="1.3" stroke-linejoin="round" stroke-linecap="round"/><path d="M12 12 V23" stroke="#3d3d3d" stroke-width="1.3" stroke-linejoin="round" stroke-linecap="round"/></svg>
<svg style="left:1756px;top:60px" width="24" height="24" viewBox="0 0 24 24"><rect x="7" y="3" width="15" height="19.500" fill="#ededed"/><path d="M22 3 H13.500 V9 A3.200 3.200 0 1 1 9.500 13.500 H2.500 V22.500" fill="none" stroke="#555" stroke-width="1.600"/><path d="M12 16 V22.500 M16 13.500 H22" stroke="#c4c4c4" stroke-width="1.300"/></svg>
<svg style="left:1799px;top:60px" width="24" height="24" viewBox="0 0 24 24"><rect x="0.500" y="2" width="22" height="20.500" fill="#ededed"/><path d="M0.500 2 H22.500 V8 H12 A3.800 3.800 0 0 0 12 15.600 H22.500 V22.500 M19 15.600 V22.500" fill="none" stroke="#555" stroke-width="1.600"/></svg>
<svg style="left:1841px;top:60px" width="24" height="24" viewBox="0 0 24 24"><path d="M1.500 7 Q1.500 3.500 5 3.500 H11 V3 L14 2 L21.500 8 V19.500 Q21.500 23 18 23 H8.500 L1.500 17 Z" fill="#ededed" stroke="#3d3d3d" stroke-width="1.3" stroke-linejoin="round" stroke-linecap="round"/><path d="M5.500 4 V14.500 L11 14.500 V3 M5.500 14.500 L11.500 20 H18.500 L11 14.500 M18.500 20 Q19 20 19 17.500 V8" fill="none" stroke="#3d3d3d" stroke-width="1.3" stroke-linejoin="round" stroke-linecap="round"/><path d="M11 14.500 L18.500 20 H11.500 Z" fill="#9a9a9a"/><path d="M11.500 6 L15 10 L22.500 1.500" fill="none" stroke="#222" stroke-width="2.600"/></svg>
<svg style="left:1886px;top:58px" width="28" height="28" viewBox="0 0 28 28"><rect x="1.500" y="1.500" width="25" height="25" rx="4.500" fill="none" stroke="#2b2b2b" stroke-width="1.700" stroke-dasharray="5.200 3.300" stroke-dashoffset="2.600"/><path d="M8.500 14 H19.500 M14 8.500 V19.500" stroke="#2b2b2b" stroke-width="2.300"/></svg>
<div class="t" style="left:131.0px;top:63.0px;font-size:17.5px;line-height:21.0px;color:#3a3a3a;transform:scaleX(0.9719);">Sketch</div>
<div class="abs" style="left:1936px;top:55px;width:183px;height:36px;background:#ededed;border-radius:4px"></div>
<div class="t" style="left:1949.0px;top:63.0px;font-size:17.5px;line-height:21.0px;color:#3a3a3a;transform:scaleX(0.9655);">Search tools...</div>
<div class="abs" style="left:2061px;top:64px;width:22px;height:18px;background:#f4f4f4;border:1px solid #c6c6c6;border-bottom:2px solid #bdbdbd;border-radius:3px"></div>
<div class="abs" style="left:2085px;top:64px;width:19px;height:18px;background:#f4f4f4;border:1px solid #c6c6c6;border-bottom:2px solid #bdbdbd;border-radius:3px"></div>
<div class="t" style="left:2064.5px;top:64.8px;font-size:14.5px;line-height:17.4px;color:#555;transform:scaleX(1.1101);">alt</div>
<div class="t" style="left:2090.5px;top:64.8px;font-size:14.5px;line-height:17.4px;color:#555;transform:scaleX(0.9550);">C</div>
<div id="panel"></div>
<div class="t" style="left:6.0px;top:104.8px;font-size:17.5px;line-height:21.0px;color:#2b2b2b;font-weight:bold;transform:scaleX(0.9088);">Features (40)</div>
<div class="abs" style="left:54px;top:136px;width:179px;height:35px;border:1px solid #c9c9c9;border-radius:4px;box-shadow:inset 0 1px 1px #e6e6e6"></div>
<div class="t" style="left:61.0px;top:144.0px;font-size:17.5px;line-height:21.0px;color:#8d8d8d;font-style:italic;transform:scaleX(0.9041);">Filter by name or type</div>
<div class="abs" style="left:233px;top:178px;width:16px;height:770px;background:#f1f1f1"></div>
<div class="abs" style="left:236px;top:195px;width:11px;height:415px;background:#c1c1c1"></div>
<svg style="left:234px;top:178px" width="14" height="770" viewBox="0 0 14 770"><path d="M3.5 11 L7 6.5 L10.5 11Z" fill="#a3a3a3"/><path d="M3.5 760 L7 764.5 L10.5 760Z" fill="#505050"/></svg>
<div class="abs" style="left:0;top:178px;width:234px;height:770px;overflow:hidden">
<div class="t" style="left:29.0px;top:6.0px;font-size:17.5px;line-height:21.0px;color:#333;transform:scaleX(0.9530);">Default geometry</div>
<svg style="left:4px;top:8.0px" width="16" height="16" viewBox="0 0 16 16"><path d="M2 4.500 L8 10.500 L14 4.500" fill="none" stroke="#4a4a4a" stroke-width="2.300"/></svg>
<div class="t" style="left:57.0px;top:39.0px;font-size:17.5px;line-height:21.0px;color:#333;transform:scaleX(0.9211);">Origin</div>
<svg style="left:35px;top:42.47999999999999px" width="12" height="12" viewBox="0 0 12 12"><circle cx="6" cy="6" r="4.300" fill="#fff" stroke="#444" stroke-width="1.200"/><circle cx="6" cy="6" r="1.700" fill="#444"/></svg>
<div class="t" style="left:57.0px;top:71.5px;font-size:17.5px;line-height:21.0px;color:#a6a6a6;transform:scaleX(0.9569);">Top</div>
<svg style="left:32px;top:70.95999999999998px" width="20" height="20" viewBox="0 0 20 20"><path d="M1.500 1.500 L18 4 V18.500 L1.500 16 Z" fill="#ebebeb" stroke="#b5b5b5" stroke-width="1.200"/><path d="M9.500 3 V10.500 L18 12" fill="none" stroke="#b5b5b5" stroke-width="1.200"/></svg>
<div class="t" style="left:57.0px;top:103.9px;font-size:17.5px;line-height:21.0px;color:#a6a6a6;transform:scaleX(0.9548);">Front</div>
<svg style="left:32px;top:103.44px" width="20" height="20" viewBox="0 0 20 20"><path d="M1.500 1.500 L18 4 V18.500 L1.500 16 Z" fill="#ebebeb" stroke="#b5b5b5" stroke-width="1.200"/><path d="M9.500 3 V10.500 L18 12" fill="none" stroke="#b5b5b5" stroke-width="1.200"/></svg>
<div class="t" style="left:57.0px;top:136.4px;font-size:17.5px;line-height:21.0px;color:#a6a6a6;transform:scaleX(0.9301);">Right</div>
<svg style="left:32px;top:135.91999999999996px" width="20" height="20" viewBox="0 0 20 20"><path d="M1.500 1.500 L18 4 V18.500 L1.500 16 Z" fill="#ebebeb" stroke="#b5b5b5" stroke-width="1.200"/><path d="M9.500 3 V10.500 L18 12" fill="none" stroke="#b5b5b5" stroke-width="1.200"/></svg>
<div class="t" style="left:32.0px;top:168.9px;font-size:17.5px;line-height:21.0px;color:#a6a6a6;transform:scaleX(0.9399);">Sketch 1</div>
<svg style="left:5px;top:168.39999999999998px" width="22" height="22" viewBox="0 0 22 22"><path d="M3.500 16.500 L5.500 12 L15 2.500 L18.200 5.500 L8.300 15 Z" fill="#fff" stroke="#b9b9b9" stroke-width="1.200" stroke-linejoin="round"/><path d="M5.500 12 L8.300 15" stroke="#b9b9b9" stroke-width="1.100"/><path d="M2 18.300 H20" stroke="#9db8e6" stroke-width="1.300"/></svg>
<div class="t" style="left:32.0px;top:201.4px;font-size:17.5px;line-height:21.0px;color:#333;transform:scaleX(0.9345);">Extrude 1</div>
<svg style="left:6px;top:201.38px" width="20" height="20" viewBox="0 0 20 20"><path d="M1 3 Q1 1 3 1 H15.500 L19 4.500 V19 H4.500 L1 15.500 Z" fill="#fff" stroke="#3d3d3d" stroke-width="1.3" stroke-linejoin="round" stroke-linecap="round"/><path d="M1.300 2 L4.500 5 H19 M4.500 5 V19" fill="none" stroke="#3d3d3d" stroke-width="1.3" stroke-linejoin="round" stroke-linecap="round"/><path d="M7.500 9.500 L9.500 7.500 H19 V19 H10 L7.500 16.500 Z" fill="#b0b0b0" stroke="#3d3d3d" stroke-width="1.3" stroke-linejoin="round" stroke-linecap="round"/><rect x="10" y="10" width="9" height="9" fill="#8f8f8f" stroke="#3d3d3d" stroke-width="1.3" stroke-linejoin="round" stroke-linecap="round"/></svg>
<div class="t" style="left:32.0px;top:233.9px;font-size:17.5px;line-height:21.0px;color:#a6a6a6;transform:scaleX(0.9399);">Sketch 2</div>
<svg style="left:5px;top:233.36px" width="22" height="22" viewBox="0 0 22 22"><path d="M3.500 16.500 L5.500 12 L15 2.500 L18.200 5.500 L8.300 15 Z" fill="#fff" stroke="#b9b9b9" stroke-width="1.200" stroke-linejoin="round"/><path d="M5.500 12 L8.300 15" stroke="#b9b9b9" stroke-width="1.100"/><path d="M2 18.300 H20" stroke="#9db8e6" stroke-width="1.300"/></svg>
<div class="t" style="left:32.0px;top:266.3px;font-size:17.5px;line-height:21.0px;color:#333;transform:scaleX(0.9345);">Extrude 2</div>
<svg style="left:6px;top:266.34px" width="20" height="20" viewBox="0 0 20 20"><path d="M1 3 Q1 1 3 1 H15.500 L19 4.500 V19 H4.500 L1 15.500 Z" fill="#fff" stroke="#3d3d3d" stroke-width="1.3" stroke-linejoin="round" stroke-linecap="round"/><path d="M1.300 2 L4.500 5 H19 M4.500 5 V19" fill="none" stroke="#3d3d3d" stroke-width="1.3" stroke-linejoin="round" stroke-linecap="round"/><path d="M7.500 9.500 L9.500 7.500 H19 V19 H10 L7.500 16.500 Z" fill="#b0b0b0" stroke="#3d3d3d" stroke-width="1.3" stroke-linejoin="round" stroke-linecap="round"/><rect x="10" y="10" width="9" height="9" fill="#8f8f8f" stroke="#3d3d3d" stroke-width="1.3" stroke-linejoin="round" stroke-linecap="round"/></svg>
<div class="t" style="left:32.0px;top:298.8px;font-size:17.5px;line-height:21.0px;color:#a6a6a6;transform:scaleX(0.9399);">Sketch 3</div>
<svg style="left:5px;top:298.32px" width="22" height="22" viewBox="0 0 22 22"><path d="M3.500 16.500 L5.500 12 L15 2.500 L18.200 5.500 L8.300 15 Z" fill="#fff" stroke="#b9b9b9" stroke-width="1.200" stroke-linejoin="round"/><path d="M5.500 12 L8.300 15" stroke="#b9b9b9" stroke-width="1.100"/><path d="M2 18.300 H20" stroke="#9db8e6" stroke-width="1.300"/></svg>
<div class="t" style="left:32.0px;top:331.3px;font-size:17.5px;line-height:21.0px;color:#333;transform:scaleX(0.9345);">Extrude 3</div>
<svg style="left:6px;top:331.29999999999995px" width="20" height="20" viewBox="0 0 20 20"><path d="M1 3 Q1 1 3 1 H15.500 L19 4.500 V19 H4.500 L1 15.500 Z" fill="#fff" stroke="#3d3d3d" stroke-width="1.3" stroke-linejoin="round" stroke-linecap="round"/><path d="M1.300 2 L4.500 5 H19 M4.500 5 V19" fill="none" stroke="#3d3d3d" stroke-width="1.3" stroke-linejoin="round" stroke-linecap="round"/><path d="M7.500 9.500 L9.500 7.500 H19 V19 H10 L7.500 16.500 Z" fill="#b0b0b0" stroke="#3d3d3d" stroke-width="1.3" stroke-linejoin="round" stroke-linecap="round"/><rect x="10" y="10" width="9" height="9" fill="#8f8f8f" stroke="#3d3d3d" stroke-width="1.3" stroke-linejoin="round" stroke-linecap="round"/></svg>
<div class="t" style="left:32.0px;top:363.8px;font-size:17.5px;line-height:21.0px;color:#a6a6a6;transform:scaleX(0.9399);">Sketch 4</div>
<svg style="left:5px;top:363.28px" width="22" height="22" viewBox="0 0 22 22"><path d="M3.500 16.500 L5.500 12 L15 2.500 L18.200 5.500 L8.300 15 Z" fill="#fff" stroke="#b9b9b9" stroke-width="1.200" stroke-linejoin="round"/><path d="M5.500 12 L8.300 15" stroke="#b9b9b9" stroke-width="1.100"/><path d="M2 18.300 H20" stroke="#9db8e6" stroke-width="1.300"/></svg>
<div class="t" style="left:32.0px;top:396.3px;font-size:17.5px;line-height:21.0px;color:#333;transform:scaleX(0.9345);">Extrude 4</div>
<svg style="left:6px;top:396.26px" width="20" height="20" viewBox="0 0 20 20"><path d="M1 3 Q1 1 3 1 H15.500 L19 4.500 V19 H4.500 L1 15.500 Z" fill="#fff" stroke="#3d3d3d" stroke-width="1.3" stroke-linejoin="round" stroke-linecap="round"/><path d="M1.300 2 L4.500 5 H19 M4.500 5 V19" fill="none" stroke="#3d3d3d" stroke-width="1.3" stroke-linejoin="round" stroke-linecap="round"/><path d="M7.500 9.500 L9.500 7.500 H19 V19 H10 L7.500 16.500 Z" fill="#b0b0b0" stroke="#3d3d3d" stroke-width="1.3" stroke-linejoin="round" stroke-linecap="round"/><rect x="10" y="10" width="9" height="9" fill="#8f8f8f" stroke="#3d3d3d" stroke-width="1.3" stroke-linejoin="round" stroke-linecap="round"/></svg>
<div class="t" style="left:32.0px;top:428.7px;font-size:17.5px;line-height:21.0px;color:#333;transform:scaleX(0.9302);">Chamfer 1</div>
<svg style="left:6px;top:428.74px" width="20" height="20" viewBox="0 0 20 20"><path d="M1 7.500 L7.500 1 H15.500 L19 4.500 V19 H4.500 L1 15.500 Z" fill="#fff" stroke="#3d3d3d" stroke-width="1.3" stroke-linejoin="round" stroke-linecap="round"/><path d="M1 7.500 L7.500 1 L10.500 4.500 L4.500 10.500 Z" fill="#8f8f8f" stroke="#3d3d3d" stroke-width="1.3" stroke-linejoin="round" stroke-linecap="round"/><path d="M10.500 4.500 H19 M4.500 10.500 V19" fill="none" stroke="#3d3d3d" stroke-width="1.3" stroke-linejoin="round" stroke-linecap="round"/></svg>
<div class="t" style="left:32.0px;top:461.2px;font-size:17.5px;line-height:21.0px;color:#a6a6a6;transform:scaleX(0.9399);">Sketch 5</div>
<svg style="left:5px;top:460.72px" width="22" height="22" viewBox="0 0 22 22"><path d="M3.500 16.500 L5.500 12 L15 2.500 L18.200 5.500 L8.300 15 Z" fill="#fff" stroke="#b9b9b9" stroke-width="1.200" stroke-linejoin="round"/><path d="M5.500 12 L8.300 15" stroke="#b9b9b9" stroke-width="1.100"/><path d="M2 18.300 H20" stroke="#9db8e6" stroke-width="1.300"/></svg>
<div class="t" style="left:32.0px;top:493.7px;font-size:17.5px;line-height:21.0px;color:#333;transform:scaleX(0.9345);">Extrude 5</div>
<svg style="left:6px;top:493.69999999999993px" width="20" height="20" viewBox="0 0 20 20"><path d="M1 3 Q1 1 3 1 H15.500 L19 4.500 V19 H4.500 L1 15.500 Z" fill="#fff" stroke="#3d3d3d" stroke-width="1.3" stroke-linejoin="round" stroke-linecap="round"/><path d="M1.300 2 L4.500 5 H19 M4.500 5 V19" fill="none" stroke="#3d3d3d" stroke-width="1.3" stroke-linejoin="round" stroke-linecap="round"/><path d="M7.500 9.500 L9.500 7.500 H19 V19 H10 L7.500 16.500 Z" fill="#b0b0b0" stroke="#3d3d3d" stroke-width="1.3" stroke-linejoin="round" stroke-linecap="round"/><rect x="10" y="10" width="9" height="9" fill="#8f8f8f" stroke="#3d3d3d" stroke-width="1.3" stroke-linejoin="round" stroke-linecap="round"/></svg>
<div class="t" style="left:32.0px;top:526.2px;font-size:17.5px;line-height:21.0px;color:#333;transform:scaleX(0.9345);">Extrude 6</div>
<svg style="left:6px;top:526.18px" width="20" height="20" viewBox="0 0 20 20"><path d="M1 3 Q1 1 3 1 H15.500 L19 4.500 V19 H4.500 L1 15.500 Z" fill="#fff" stroke="#3d3d3d" stroke-width="1.3" stroke-linejoin="round" stroke-linecap="round"/><path d="M1.300 2 L4.500 5 H19 M4.500 5 V19" fill="none" stroke="#3d3d3d" stroke-width="1.3" stroke-linejoin="round" stroke-linecap="round"/><path d="M7.500 9.500 L9.500 7.500 H19 V19 H10 L7.500 16.500 Z" fill="#b0b0b0" stroke="#3d3d3d" stroke-width="1.3" stroke-linejoin="round" stroke-linecap="round"/><rect x="10" y="10" width="9" height="9" fill="#8f8f8f" stroke="#3d3d3d" stroke-width="1.3" stroke-linejoin="round" stroke-linecap="round"/></svg>
<div class="t" style="left:32.0px;top:558.7px;font-size:17.5px;line-height:21.0px;color:#a6a6a6;transform:scaleX(0.9399);">Sketch 6</div>
<svg style="left:5px;top:558.16px" width="22" height="22" viewBox="0 0 22 22"><path d="M3.500 16.500 L5.500 12 L15 2.500 L18.200 5.500 L8.300 15 Z" fill="#fff" stroke="#b9b9b9" stroke-width="1.200" stroke-linejoin="round"/><path d="M5.500 12 L8.300 15" stroke="#b9b9b9" stroke-width="1.100"/><path d="M2 18.300 H20" stroke="#9db8e6" stroke-width="1.300"/></svg>
<div class="t" style="left:32.0px;top:591.1px;font-size:17.5px;line-height:21.0px;color:#333;transform:scaleX(0.9345);">Extrude 7</div>
<svg style="left:6px;top:591.14px" width="20" height="20" viewBox="0 0 20 20"><path d="M1 3 Q1 1 3 1 H15.500 L19 4.500 V19 H4.500 L1 15.500 Z" fill="#fff" stroke="#3d3d3d" stroke-width="1.3" stroke-linejoin="round" stroke-linecap="round"/><path d="M1.300 2 L4.500 5 H19 M4.500 5 V19" fill="none" stroke="#3d3d3d" stroke-width="1.3" stroke-linejoin="round" stroke-linecap="round"/><path d="M7.500 9.500 L9.500 7.500 H19 V19 H10 L7.500 16.500 Z" fill="#b0b0b0" stroke="#3d3d3d" stroke-width="1.3" stroke-linejoin="round" stroke-linecap="round"/><rect x="10" y="10" width="9" height="9" fill="#8f8f8f" stroke="#3d3d3d" stroke-width="1.3" stroke-linejoin="round" stroke-linecap="round"/></svg>
<div class="t" style="left:32.0px;top:623.6px;font-size:17.5px;line-height:21.0px;color:#a6a6a6;transform:scaleX(0.9399);">Sketch 7</div>
<svg style="left:5px;top:623.1199999999999px" width="22" height="22" viewBox="0 0 22 22"><path d="M3.500 16.500 L5.500 12 L15 2.500 L18.200 5.500 L8.300 15 Z" fill="#fff" stroke="#b9b9b9" stroke-width="1.200" stroke-linejoin="round"/><path d="M5.500 12 L8.300 15" stroke="#b9b9b9" stroke-width="1.100"/><path d="M2 18.300 H20" stroke="#9db8e6" stroke-width="1.300"/></svg>
<div class="t" style="left:32.0px;top:656.1px;font-size:17.5px;line-height:21.0px;color:#333;transform:scaleX(0.9345);">Extrude 8</div>
<svg style="left:6px;top:656.0999999999999px" width="20" height="20" viewBox="0 0 20 20"><path d="M1 3 Q1 1 3 1 H15.500 L19 4.500 V19 H4.500 L1 15.500 Z" fill="#fff" stroke="#3d3d3d" stroke-width="1.3" stroke-linejoin="round" stroke-linecap="round"/><path d="M1.300 2 L4.500 5 H19 M4.500 5 V19" fill="none" stroke="#3d3d3d" stroke-width="1.3" stroke-linejoin="round" stroke-linecap="round"/><path d="M7.500 9.500 L9.500 7.500 H19 V19 H10 L7.500 16.500 Z" fill="#b0b0b0" stroke="#3d3d3d" stroke-width="1.3" stroke-linejoin="round" stroke-linecap="round"/><rect x="10" y="10" width="9" height="9" fill="#8f8f8f" stroke="#3d3d3d" stroke-width="1.3" stroke-linejoin="round" stroke-linecap="round"/></svg>
<div class="t" style="left:32.0px;top:688.6px;font-size:17.5px;line-height:21.0px;color:#333;transform:scaleX(0.9345);">Extrude 9</div>
<svg style="left:6px;top:688.5799999999999px" width="20" height="20" viewBox="0 0 20 20"><path d="M1 3 Q1 1 3 1 H15.500 L19 4.500 V19 H4.500 L1 15.500 Z" fill="#fff" stroke="#3d3d3d" stroke-width="1.3" stroke-linejoin="round" stroke-linecap="round"/><path d="M1.300 2 L4.500 5 H19 M4.500 5 V19" fill="none" stroke="#3d3d3d" stroke-width="1.3" stroke-linejoin="round" stroke-linecap="round"/><path d="M7.500 9.500 L9.500 7.500 H19 V19 H10 L7.500 16.500 Z" fill="#b0b0b0" stroke="#3d3d3d" stroke-width="1.3" stroke-linejoin="round" stroke-linecap="round"/><rect x="10" y="10" width="9" height="9" fill="#8f8f8f" stroke="#3d3d3d" stroke-width="1.3" stroke-linejoin="round" stroke-linecap="round"/></svg>
<div class="t" style="left:32.0px;top:721.1px;font-size:17.5px;line-height:21.0px;color:#a6a6a6;transform:scaleX(0.9399);">Sketch 8</div>
<svg style="left:5px;top:720.56px" width="22" height="22" viewBox="0 0 22 22"><path d="M3.500 16.500 L5.500 12 L15 2.500 L18.200 5.500 L8.300 15 Z" fill="#fff" stroke="#b9b9b9" stroke-width="1.200" stroke-linejoin="round"/><path d="M5.500 12 L8.300 15" stroke="#b9b9b9" stroke-width="1.100"/><path d="M2 18.300 H20" stroke="#9db8e6" stroke-width="1.300"/></svg>
<div class="t" style="left:32.0px;top:753.5px;font-size:17.5px;line-height:21.0px;color:#333;transform:scaleX(0.9452);">Extrude 10</div>
<svg style="left:6px;top:753.54px" width="20" height="20" viewBox="0 0 20 20"><path d="M1 3 Q1 1 3 1 H15.500 L19 4.500 V19 H4.500 L1 15.500 Z" fill="#fff" stroke="#3d3d3d" stroke-width="1.3" stroke-linejoin="round" stroke-linecap="round"/><path d="M1.300 2 L4.500 5 H19 M4.500 5 V19" fill="none" stroke="#3d3d3d" stroke-width="1.3" stroke-linejoin="round" stroke-linecap="round"/><path d="M7.500 9.500 L9.500 7.500 H19 V19 H10 L7.500 16.500 Z" fill="#b0b0b0" stroke="#3d3d3d" stroke-width="1.3" stroke-linejoin="round" stroke-linecap="round"/><rect x="10" y="10" width="9" height="9" fill="#8f8f8f" stroke="#3d3d3d" stroke-width="1.3" stroke-linejoin="round" stroke-linecap="round"/></svg>
</div>
<div class="abs" style="left:12px;top:210px;width:1px;height:130px;background:#c8c8c8"></div>
<div class="abs" style="left:6px;top:339px;width:13px;height:1px;background:#c8c8c8"></div>
<div class="abs" style="left:0;top:949px;width:248px;height:1px;background:#cfcfcf"></div>
<div class="t" style="left:29.0px;top:956.5px;font-size:17.5px;line-height:21.0px;color:#333;transform:scaleX(0.9091);">Parts (1)</div>
<div class="t" style="left:29.0px;top:989.5px;font-size:17.5px;line-height:21.0px;color:#333;transform:scaleX(0.9210);">Part 1</div>
<div class="abs" style="left:12px;top:983px;width:1px;height:32px;background:#c8c8c8"></div>
<div class="abs" style="left:6px;top:1014px;width:13px;height:1px;background:#c8c8c8"></div>
<svg style="left:168px;top:104px" width="28" height="26" viewBox="0 0 28 26"><path d="M3 13 V4.500 Q3 3 4.500 3 H10 L12 5.500 H23.500 Q25 5.500 25 7 V20 Q25 21.500 23.500 21.500 H14" fill="none" stroke="#333" stroke-width="1.500"/><path d="M3 19.500 V21.500 H5" fill="none" stroke="#333" stroke-width="1.300"/><path d="M3.500 15.500 H12.500 M8 11 V20" stroke="#1a52b3" stroke-width="2.300"/></svg>
<svg style="left:205px;top:102px" width="28" height="30" viewBox="0 0 28 30"><circle cx="13.500" cy="16" r="9.300" fill="none" stroke="#222" stroke-width="2.200"/><path d="M10.500 3.300 H16.500 M13.500 3.500 V7 M20 8 L22 6" stroke="#222" stroke-width="2"/><path d="M13.500 16 L18 20" stroke="#222" stroke-width="1.800"/></svg>
<svg style="left:17px;top:143px" width="22" height="24" viewBox="0 0 22 24"><path d="M2 2.500 H20 L13 11 V19 L9 16.500 V11 Z" fill="none" stroke="#333" stroke-width="1.600" stroke-linejoin="round"/></svg>
<svg style="left:4px;top:958px" width="16" height="16" viewBox="0 0 16 16"><path d="M2 4.500 L8 10.500 L14 4.500" fill="none" stroke="#4a4a4a" stroke-width="2.300"/></svg>
<div class="abs" style="left:258px;top:717px;width:38px;height:40px;background:#fff;border:1px solid #c9c9c9;border-left:none"></div>
<svg style="left:264px;top:725px" width="26" height="26" viewBox="0 0 26 26"><path d="M2.500 3.500 L5 6.500 L7.500 3.500" fill="none" stroke="#333" stroke-width="1.600"/><path d="M5 7.500 V23" stroke="#333" stroke-width="1.600"/><path d="M9 4.500 H24 M9 10.500 H24 M9 16.500 H24 M9 22.500 H24" stroke="#555" stroke-width="1.500"/></svg>
<div id="tabs">
<div class="tab act" style="left:95px;width:143px"></div>
<div class="t" style="left:136.5px;top:6.1px;font-size:17.5px;line-height:21.0px;color:#333;transform:scaleX(0.9486);">base</div>
<svg style="left:108px;top:3px" width="24" height="24" viewBox="0 0 24 24"><path d="M2.3 6.7 H9.5 L13.2 10.1 V23.3 H6.4 L2.3 19.6 Z" fill="#fff" stroke="#454545" stroke-width="1.5" stroke-linejoin="round"/><path d="M2.3 6.7 L6.4 10.1 H13.2 M6.4 10.1 V23.3" fill="none" stroke="#454545" stroke-width="1.5" stroke-linejoin="round"/><path d="M12.9 1.4 H20.1 L23.6 5.4 V23.3 H16.4 L12.9 20 Z" fill="#fff" stroke="#454545" stroke-width="1.5" stroke-linejoin="round"/><path d="M12.9 1.4 L16.4 5.4 H23.6 M16.4 5.4 V23.3" fill="none" stroke="#454545" stroke-width="1.5" stroke-linejoin="round"/><path d="M8 11.5 V22 M18 7 V22" stroke="#d0d0d0" stroke-width="1"/></svg>
<div class="tab" style="left:242px;width:218px"></div>
<div class="t" style="left:283.5px;top:6.1px;font-size:17.5px;line-height:21.0px;color:#5a5a5a;transform:scaleX(0.9753);">Cable orgnizer</div>
<svg style="left:255px;top:3px" width="24" height="24" viewBox="0 0 24 24"><path d="M2.3 6.7 H9.5 L13.2 10.1 V23.3 H6.4 L2.3 19.6 Z" fill="#fff" stroke="#454545" stroke-width="1.5" stroke-linejoin="round"/><path d="M2.3 6.7 L6.4 10.1 H13.2 M6.4 10.1 V23.3" fill="none" stroke="#454545" stroke-width="1.5" stroke-linejoin="round"/><path d="M12.9 1.4 H20.1 L23.6 5.4 V23.3 H16.4 L12.9 20 Z" fill="#fff" stroke="#454545" stroke-width="1.5" stroke-linejoin="round"/><path d="M12.9 1.4 L16.4 5.4 H23.6 M16.4 5.4 V23.3" fill="none" stroke="#454545" stroke-width="1.5" stroke-linejoin="round"/><path d="M8 11.5 V22 M18 7 V22" stroke="#d0d0d0" stroke-width="1"/></svg>
<div class="tab" style="left:464px;width:148px"></div>
<div class="t" style="left:505.5px;top:6.1px;font-size:17.5px;line-height:21.0px;color:#5a5a5a;transform:scaleX(0.9814);">cover</div>
<svg style="left:477px;top:3px" width="24" height="24" viewBox="0 0 24 24"><path d="M2.3 6.7 H9.5 L13.2 10.1 V23.3 H6.4 L2.3 19.6 Z" fill="#fff" stroke="#454545" stroke-width="1.5" stroke-linejoin="round"/><path d="M2.3 6.7 L6.4 10.1 H13.2 M6.4 10.1 V23.3" fill="none" stroke="#454545" stroke-width="1.5" stroke-linejoin="round"/><path d="M12.9 1.4 H20.1 L23.6 5.4 V23.3 H16.4 L12.9 20 Z" fill="#fff" stroke="#454545" stroke-width="1.5" stroke-linejoin="round"/><path d="M12.9 1.4 L16.4 5.4 H23.6 M16.4 5.4 V23.3" fill="none" stroke="#454545" stroke-width="1.5" stroke-linejoin="round"/><path d="M8 11.5 V22 M18 7 V22" stroke="#d0d0d0" stroke-width="1"/></svg>
<div class="tab" style="left:616px;width:204px"></div>
<div class="t" style="left:657.5px;top:6.1px;font-size:17.5px;line-height:21.0px;color:#5a5a5a;transform:scaleX(0.9505);">cover Copy 1</div>
<svg style="left:629px;top:3px" width="24" height="24" viewBox="0 0 24 24"><path d="M2.3 6.7 H9.5 L13.2 10.1 V23.3 H6.4 L2.3 19.6 Z" fill="#fff" stroke="#454545" stroke-width="1.5" stroke-linejoin="round"/><path d="M2.3 6.7 L6.4 10.1 H13.2 M6.4 10.1 V23.3" fill="none" stroke="#454545" stroke-width="1.5" stroke-linejoin="round"/><path d="M12.9 1.4 H20.1 L23.6 5.4 V23.3 H16.4 L12.9 20 Z" fill="#fff" stroke="#454545" stroke-width="1.5" stroke-linejoin="round"/><path d="M12.9 1.4 L16.4 5.4 H23.6 M16.4 5.4 V23.3" fill="none" stroke="#454545" stroke-width="1.5" stroke-linejoin="round"/><path d="M8 11.5 V22 M18 7 V22" stroke="#d0d0d0" stroke-width="1"/></svg>
<div class="tab" style="left:824px;width:235px"></div>
<div class="t" style="left:865.5px;top:6.1px;font-size:17.5px;line-height:21.0px;color:#5a5a5a;transform:scaleX(0.9824);">Electronics Case</div>
<svg style="left:837px;top:3px" width="24" height="24" viewBox="0 0 24 24"><path d="M2.3 6.7 H9.5 L13.2 10.1 V23.3 H6.4 L2.3 19.6 Z" fill="#fff" stroke="#454545" stroke-width="1.5" stroke-linejoin="round"/><path d="M2.3 6.7 L6.4 10.1 H13.2 M6.4 10.1 V23.3" fill="none" stroke="#454545" stroke-width="1.5" stroke-linejoin="round"/><path d="M12.9 1.4 H20.1 L23.6 5.4 V23.3 H16.4 L12.9 20 Z" fill="#fff" stroke="#454545" stroke-width="1.5" stroke-linejoin="round"/><path d="M12.9 1.4 L16.4 5.4 H23.6 M16.4 5.4 V23.3" fill="none" stroke="#454545" stroke-width="1.5" stroke-linejoin="round"/><path d="M8 11.5 V22 M18 7 V22" stroke="#d0d0d0" stroke-width="1"/></svg>
<div class="tab" style="left:1063px;width:249px"></div>
<div class="t" style="left:1104.5px;top:6.1px;font-size:17.5px;line-height:21.0px;color:#5a5a5a;transform:scaleX(0.9655);">Electronics Case Copy 1</div>
<svg style="left:1076px;top:3px" width="24" height="24" viewBox="0 0 24 24"><path d="M2.3 6.7 H9.5 L13.2 10.1 V23.3 H6.4 L2.3 19.6 Z" fill="#fff" stroke="#454545" stroke-width="1.5" stroke-linejoin="round"/><path d="M2.3 6.7 L6.4 10.1 H13.2 M6.4 10.1 V23.3" fill="none" stroke="#454545" stroke-width="1.5" stroke-linejoin="round"/><path d="M12.9 1.4 H20.1 L23.6 5.4 V23.3 H16.4 L12.9 20 Z" fill="#fff" stroke="#454545" stroke-width="1.5" stroke-linejoin="round"/><path d="M12.9 1.4 L16.4 5.4 H23.6 M16.4 5.4 V23.3" fill="none" stroke="#454545" stroke-width="1.5" stroke-linejoin="round"/><path d="M8 11.5 V22 M18 7 V22" stroke="#d0d0d0" stroke-width="1"/></svg>
<div class="tab" style="left:1316px;width:196px"></div>
<div class="t" style="left:1357.5px;top:6.1px;font-size:17.5px;line-height:21.0px;color:#5a5a5a;transform:scaleX(0.9950);">Assembly 2</div>
<svg style="left:1329px;top:3px" width="24" height="24" viewBox="0 0 24 24"><path d="M0.3 1.4 H17.6 L22.6 6.7 V23.6 H5.4 L0.3 18.6 Z" fill="#fff" stroke="#454545" stroke-width="1.5" stroke-linejoin="round"/><path d="M0.3 1.4 H12 L16.1 6.7 V16.4 H5.4 L0.3 12 Z" fill="#999"/><path d="M0.3 1.4 L5.4 6.7 H22.6 M5.4 6.7 V23.6" fill="none" stroke="#454545" stroke-width="1.5" stroke-linejoin="round"/><path d="M5.4 16.4 H16.1 V6.7 M5.4 16.4 L0.3 12" fill="none" stroke="#6a6a6a" stroke-width="1"/></svg>
<div class="tab" style="left:1516px;width:196px"></div>
<div class="t" style="left:1557.5px;top:6.1px;font-size:17.5px;line-height:21.0px;color:#5a5a5a;transform:scaleX(0.9840);">Assembly 1</div>
<svg style="left:1529px;top:3px" width="24" height="24" viewBox="0 0 24 24"><path d="M0.3 1.4 H17.6 L22.6 6.7 V23.6 H5.4 L0.3 18.6 Z" fill="#fff" stroke="#454545" stroke-width="1.5" stroke-linejoin="round"/><path d="M0.3 1.4 H12 L16.1 6.7 V16.4 H5.4 L0.3 12 Z" fill="#999"/><path d="M0.3 1.4 L5.4 6.7 H22.6 M5.4 6.7 V23.6" fill="none" stroke="#454545" stroke-width="1.5" stroke-linejoin="round"/><path d="M5.4 16.4 H16.1 V6.7 M5.4 16.4 L0.3 12" fill="none" stroke="#6a6a6a" stroke-width="1"/></svg>
<div class="tab" style="left:1716px;width:136px"></div>
<div class="t" style="left:1757.5px;top:6.1px;font-size:17.5px;line-height:21.0px;color:#5a5a5a;transform:scaleX(0.9345);">Rod</div>
<svg style="left:1729px;top:3px" width="24" height="24" viewBox="0 0 24 24"><path d="M2.3 6.7 H9.5 L13.2 10.1 V23.3 H6.4 L2.3 19.6 Z" fill="#fff" stroke="#454545" stroke-width="1.5" stroke-linejoin="round"/><path d="M2.3 6.7 L6.4 10.1 H13.2 M6.4 10.1 V23.3" fill="none" stroke="#454545" stroke-width="1.5" stroke-linejoin="round"/><path d="M12.9 1.4 H20.1 L23.6 5.4 V23.3 H16.4 L12.9 20 Z" fill="#fff" stroke="#454545" stroke-width="1.5" stroke-linejoin="round"/><path d="M12.9 1.4 L16.4 5.4 H23.6 M16.4 5.4 V23.3" fill="none" stroke="#454545" stroke-width="1.5" stroke-linejoin="round"/><path d="M8 11.5 V22 M18 7 V22" stroke="#d0d0d0" stroke-width="1"/></svg>
<div class="tab" style="left:1856px;width:178px"></div>
<div class="t" style="left:1897.5px;top:6.1px;font-size:17.5px;line-height:21.0px;color:#5a5a5a;">tensioner</div>
<svg style="left:1869px;top:3px" width="24" height="24" viewBox="0 0 24 24"><path d="M2.3 6.7 H9.5 L13.2 10.1 V23.3 H6.4 L2.3 19.6 Z" fill="#fff" stroke="#454545" stroke-width="1.5" stroke-linejoin="round"/><path d="M2.3 6.7 L6.4 10.1 H13.2 M6.4 10.1 V23.3" fill="none" stroke="#454545" stroke-width="1.5" stroke-linejoin="round"/><path d="M12.9 1.4 H20.1 L23.6 5.4 V23.3 H16.4 L12.9 20 Z" fill="#fff" stroke="#454545" stroke-width="1.5" stroke-linejoin="round"/><path d="M12.9 1.4 L16.4 5.4 H23.6 M16.4 5.4 V23.3" fill="none" stroke="#454545" stroke-width="1.5" stroke-linejoin="round"/><path d="M8 11.5 V22 M18 7 V22" stroke="#d0d0d0" stroke-width="1"/></svg>
<div class="tab" style="left:2038px;width:170px"></div>
<div class="t" style="left:2079.5px;top:6.1px;font-size:17.5px;line-height:21.0px;color:#5a5a5a;transform:scaleX(1.0122);">ir holder</div>
<svg style="left:2051px;top:3px" width="24" height="24" viewBox="0 0 24 24"><path d="M2.3 6.7 H9.5 L13.2 10.1 V23.3 H6.4 L2.3 19.6 Z" fill="#fff" stroke="#454545" stroke-width="1.5" stroke-linejoin="round"/><path d="M2.3 6.7 L6.4 10.1 H13.2 M6.4 10.1 V23.3" fill="none" stroke="#454545" stroke-width="1.5" stroke-linejoin="round"/><path d="M12.9 1.4 H20.1 L23.6 5.4 V23.3 H16.4 L12.9 20 Z" fill="#fff" stroke="#454545" stroke-width="1.5" stroke-linejoin="round"/><path d="M12.9 1.4 L16.4 5.4 H23.6 M16.4 5.4 V23.3" fill="none" stroke="#454545" stroke-width="1.5" stroke-linejoin="round"/><path d="M8 11.5 V22 M18 7 V22" stroke="#d0d0d0" stroke-width="1"/></svg>
<div class="tab" style="left:2212px;width:136px"></div>
<div class="t" style="left:2253.5px;top:6.1px;font-size:17.5px;line-height:21.0px;color:#5a5a5a;transform:scaleX(1.0280);">grip</div>
<svg style="left:2225px;top:3px" width="24" height="24" viewBox="0 0 24 24"><path d="M2.3 6.7 H9.5 L13.2 10.1 V23.3 H6.4 L2.3 19.6 Z" fill="#fff" stroke="#454545" stroke-width="1.5" stroke-linejoin="round"/><path d="M2.3 6.7 L6.4 10.1 H13.2 M6.4 10.1 V23.3" fill="none" stroke="#454545" stroke-width="1.5" stroke-linejoin="round"/><path d="M12.9 1.4 H20.1 L23.6 5.4 V23.3 H16.4 L12.9 20 Z" fill="#fff" stroke="#454545" stroke-width="1.5" stroke-linejoin="round"/><path d="M12.9 1.4 L16.4 5.4 H23.6 M16.4 5.4 V23.3" fill="none" stroke="#454545" stroke-width="1.5" stroke-linejoin="round"/><path d="M8 11.5 V22 M18 7 V22" stroke="#d0d0d0" stroke-width="1"/></svg>
<div class="tab" style="left:2352px;width:204px"></div>
<div class="t" style="left:2393.5px;top:6.1px;font-size:17.5px;line-height:21.0px;color:#5a5a5a;transform:scaleX(0.9686);">Part Studio 1</div>
<svg style="left:2365px;top:3px" width="24" height="24" viewBox="0 0 24 24"><path d="M2.3 6.7 H9.5 L13.2 10.1 V23.3 H6.4 L2.3 19.6 Z" fill="#fff" stroke="#454545" stroke-width="1.5" stroke-linejoin="round"/><path d="M2.3 6.7 L6.4 10.1 H13.2 M6.4 10.1 V23.3" fill="none" stroke="#454545" stroke-width="1.5" stroke-linejoin="round"/><path d="M12.9 1.4 H20.1 L23.6 5.4 V23.3 H16.4 L12.9 20 Z" fill="#fff" stroke="#454545" stroke-width="1.5" stroke-linejoin="round"/><path d="M12.9 1.4 L16.4 5.4 H23.6 M16.4 5.4 V23.3" fill="none" stroke="#454545" stroke-width="1.5" stroke-linejoin="round"/><path d="M8 11.5 V22 M18 7 V22" stroke="#d0d0d0" stroke-width="1"/></svg>
<svg style="left:8px;top:7px" width="28" height="24" viewBox="0 0 28 24"><circle cx="11" cy="11" r="6.300" fill="none" stroke="#555" stroke-width="2"/><path d="M15.500 15.500 L21 21" stroke="#555" stroke-width="2.400"/><path d="M2 2.500 H25 M19 8.500 H25 M20 14 H25" stroke="#555" stroke-width="1.800"/></svg>
<svg style="left:56px;top:8px" width="22" height="22" viewBox="0 0 22 22"><path d="M1.500 11 H20.500 M11 1.500 V20.500" stroke="#444" stroke-width="3"/></svg>
</div>
<svg style="left:2330px;top:100px" width="230" height="220" viewBox="0 0 230 220"><path d="M117 14 L126 26 L108 26 Z" fill="#e3eaf0"/><path d="M117 201 L126 189 L108 189 Z" fill="#e3eaf0"/><path d="M24 107 L36 98 L36 116 Z" fill="#e3eaf0"/><path d="M211 107 L199 98 L199 116 Z" fill="#e3eaf0"/><path d="M90 24 Q68 31 55 45 L51 41 L50 56 L65 55 L60 50 Q72 38 92 31 Z" fill="#e3eaf0"/><path d="M144 24 Q166 31 179 45 L183 41 L184 56 L169 55 L174 50 Q162 38 142 31 Z" fill="#e3eaf0"/><path d="M117 52 Q121 52 125 54 L160 73 Q168 78 168 86 V128 Q168 136 161 140 L125 160 Q117 164 109 160 L74 140 Q67 136 67 128 V86 Q67 78 75 73 L109 54 Q113 52 117 52 Z" fill="#e3eaf0"/><path d="M117 60 Q120 60 124 62 L146 74 Q151 78 146 81 L124 93 Q117 96 110 93 L89 81 Q84 78 89 74 L110 62 Q114 60 117 60 Z" fill="#fff"/><path d="M73 96 Q73 91 78 94 L103 108 Q108 111 108 117 V146 Q108 152 103 149 L78 135 Q73 132 73 126 Z" fill="#fff"/><path d="M162 96 Q162 91 157 94 L131 108 Q126 111 126 117 V146 Q126 152 131 149 L157 135 Q162 132 162 126 Z" fill="#fff"/><ellipse cx="117" cy="106" rx="9" ry="9" fill="#fff"/><ellipse cx="76" cy="81" rx="3" ry="6" transform="rotate(35 76 81)" fill="#fff"/><ellipse cx="159" cy="81" rx="3" ry="6" transform="rotate(-35 159 81)" fill="#fff"/><ellipse cx="117" cy="156" rx="8" ry="3" fill="#fff"/><defs><filter id="vb"><feGaussianBlur stdDeviation="0.45"/></filter></defs><text font-family="Liberation Sans, sans-serif" font-style="italic" fill="#666" filter="url(#vb)" font-size="12.5" transform="matrix(0.9 0.42 -0.85 0.5 104.7 74.8)">Top</text><text font-family="Liberation Sans, sans-serif" font-style="italic" fill="#666" filter="url(#vb)" font-size="14" transform="matrix(0.86 0.5 0 1 78.5 120.5)" textLength="29">Front</text><text font-family="Liberation Sans, sans-serif" font-style="italic" fill="#666" filter="url(#vb)" font-size="14" transform="matrix(0.86 -0.5 0 1 131.5 134.5)" textLength="27">Right</text><path d="M63 138 L116 108" stroke="#39b54a" stroke-width="1" opacity="0.75"/><path d="M63 138 L74 132" stroke="#2e9d3d" stroke-width="2"/><path d="M63.500 78 V138.500" stroke="#3f3fe0" stroke-width="2"/><path d="M63 138 L116 168" stroke="#d62b2b" stroke-width="2"/><text x="58" y="74" font-family="Liberation Sans, sans-serif" font-weight="bold" font-size="17" fill="#3f3fe0" textLength="11" lengthAdjust="spacingAndGlyphs">Z</text><text x="119" y="180" font-family="Liberation Sans, sans-serif" font-weight="bold" font-size="17" fill="#d62b2b" textLength="11" lengthAdjust="spacingAndGlyphs">X</text><text x="119" y="108" font-family="Liberation Sans, sans-serif" font-size="13" fill="#7fcf8a">Y</text><path d="M162 182 L174 178 L185 182 V196 L174 201 L162 196 Z" fill="#9b9b9b" stroke="#222" stroke-width="1.200" stroke-linejoin="round"/><path d="M162 182 L174 186 L185 182 L174 178 Z" fill="#fff" stroke="#222" stroke-width="1" stroke-linejoin="round"/><path d="M174 186 L185 182 V196 L174 201 Z" fill="#dcdcdc" stroke="#222" stroke-width="1" stroke-linejoin="round"/><path d="M195.500 188 H205.500 L200.500 193 Z" fill="#222"/></svg>
<div class="abs" style="left:2520px;top:676px;width:40px;height:123px;background:#fff;border:1px solid #c8c8c8;border-right:none"></div>
<div class="abs" style="left:2520px;top:717px;width:40px;height:1px;background:#c8c8c8"></div>
<div class="abs" style="left:2520px;top:758px;width:40px;height:1px;background:#c8c8c8"></div>
<svg style="left:2526px;top:684px" width="30" height="28" viewBox="0 0 30 28"><circle cx="14.500" cy="9" r="7" fill="#9a9a9a" stroke="#333" stroke-width="1"/><circle cx="19.500" cy="18" r="7" fill="#fff" stroke="#333" stroke-width="1"/><circle cx="9.500" cy="18" r="7" fill="#1a52b3" stroke="#222" stroke-width="1.100"/></svg>
<svg style="left:2526px;top:724px" width="30" height="30" viewBox="0 0 30 30"><path d="M7.500 10.500 L16 6.500 L25 10.500 V20 L16 25 L7.500 20 Z M7.500 10.500 L16 14.500 L25 10.500 M16 14.500 V25" fill="#fff" stroke="#333" stroke-width="1.300" stroke-linejoin="round"/><rect x="2" y="2.500" width="12.500" height="9.500" fill="#8cc4f0" stroke="#1a52b3" stroke-width="1.200"/><path d="M2 5.700 H14.500 M2 8.900 H14.500 M6.200 2.500 V12 M10.400 2.500 V12" stroke="#1a52b3" stroke-width="1"/></svg>
<svg style="left:2526px;top:764px" width="30" height="30" viewBox="0 0 30 30"><path d="M7.500 14 L14.500 10.500 L22 14 V20.500 L14.500 24.500 L7.500 20.500 Z M7.500 14 L14.500 17.500 L22 14 M14.500 17.500 V24.500" fill="#fff" stroke="#333" stroke-width="1.300" stroke-linejoin="round"/><rect x="2" y="3" width="12.500" height="9.500" fill="#8a8a8a" stroke="#333" stroke-width="1.200"/><path d="M2 6.200 H14.500 M2 9.400 H14.500 M6.200 3 V12.500 M10.400 3 V12.500" stroke="#333" stroke-width="1"/><path d="M6.500 13 Q4.500 13 4.500 15 V17 Q4.500 18.500 3 18.500 Q4.500 18.500 4.500 20 V24 Q4.500 26 6.500 26 M23 6 Q25 6 25 8 V15 Q25 16.500 26.500 16.500 Q25 16.500 25 18 V24 Q25 26 23 26" fill="none" stroke="#333" stroke-width="1.200"/></svg>
<svg style="left:2478px;top:1374px" width="26" height="22" viewBox="0 0 26 22"><path d="M3 13.500 H15 Q23 13.500 23 8.500 Q23 4 16.500 4 Q10 4 10 8.500 V13.500 M3 13.500 V16.500 H16 Q23 16.500 23 12" fill="#fff" stroke="#333" stroke-width="1.300"/><ellipse cx="16.500" cy="8.300" rx="3.500" ry="2" fill="none" stroke="#333" stroke-width="1.200"/><path d="M5 15 V16.500 M7.500 15 V16.500 M10 15 V16.500 M12.500 15 V16.500" stroke="#333" stroke-width="0.800"/></svg>
<svg style="left:2523px;top:1373px" width="24" height="24" viewBox="0 0 24 24"><path d="M3 4 H21 M12 2.500 V17.500 M3 21.500 H21 M4 17.500 H20" stroke="#333" stroke-width="1.400" fill="none"/><path d="M6.500 4 L3 13.500 H10 Z M17.500 4 L14 13.500 H21 Z" fill="none" stroke="#333" stroke-width="1.200" stroke-linejoin="round"/></svg>
</body></html>
